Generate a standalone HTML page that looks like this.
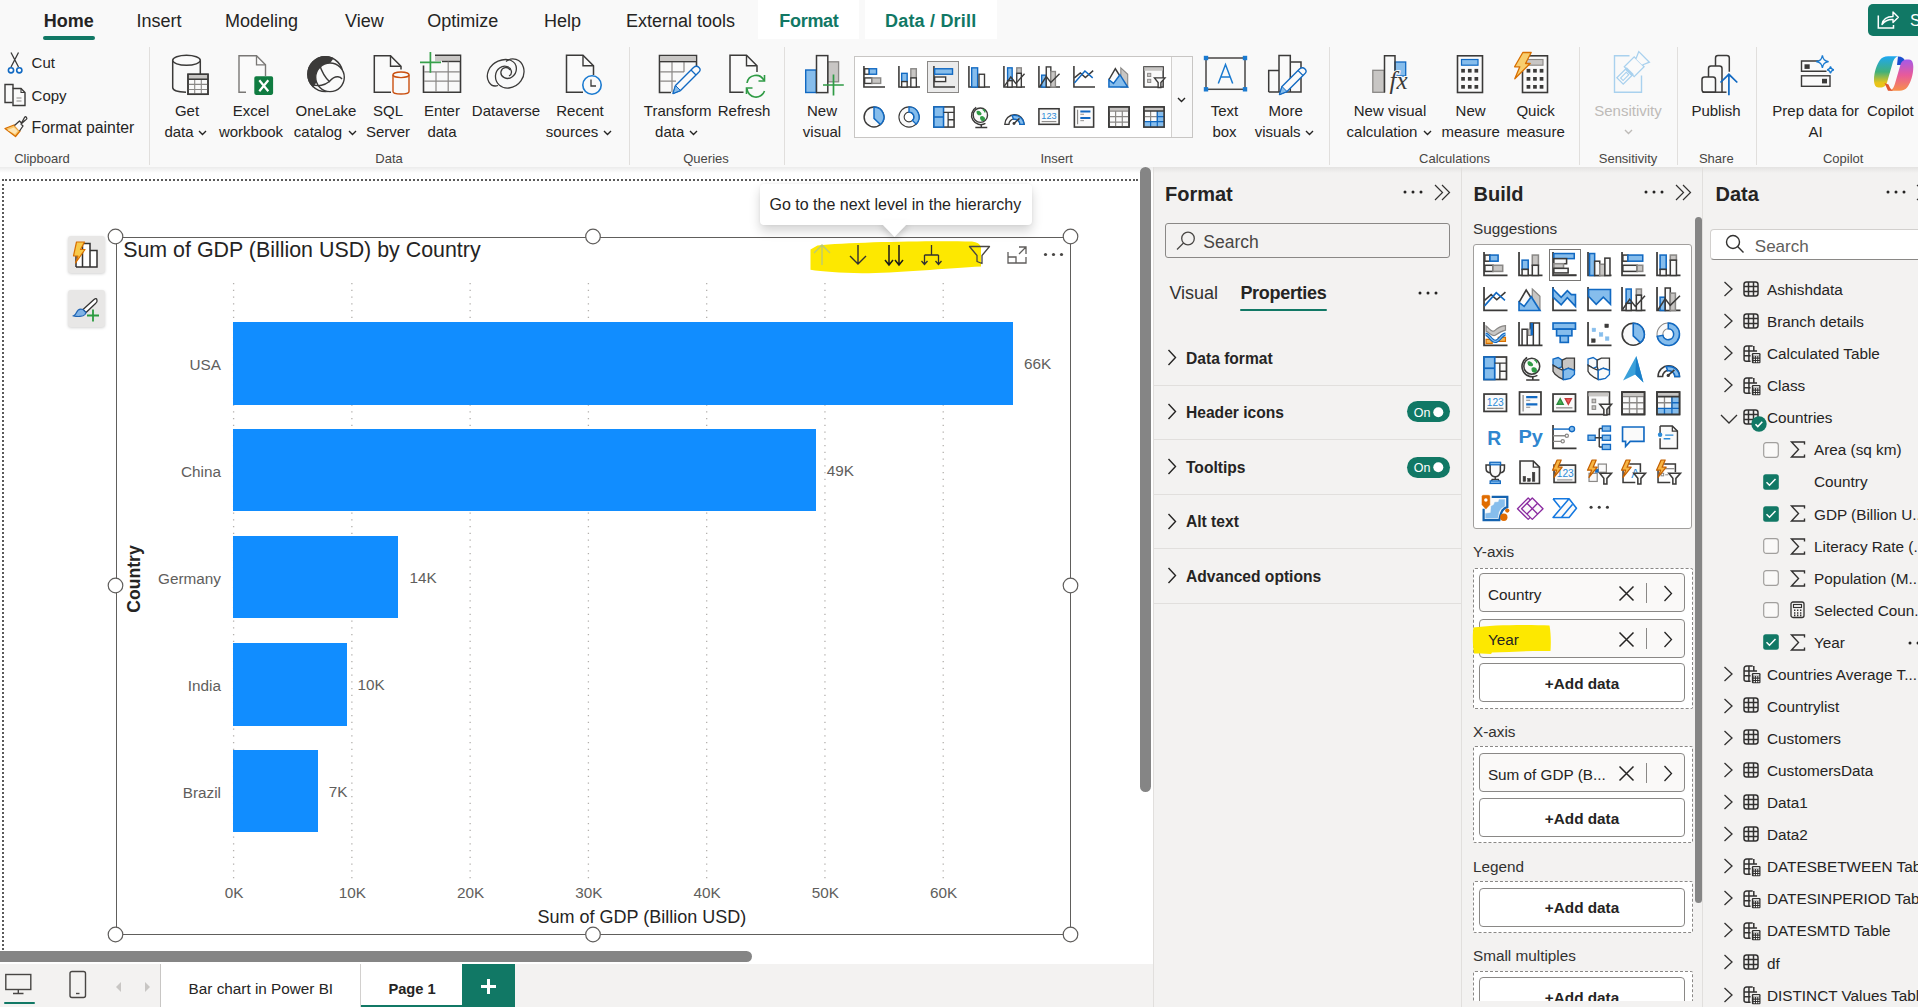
<!DOCTYPE html>
<html><head><meta charset="utf-8"><title>Power BI</title>
<style>
html,body{margin:0;padding:0}
body{width:1918px;height:1007px;overflow:hidden;position:relative;background:#f3f2f1;font-family:"Liberation Sans",sans-serif}
.t{position:absolute;line-height:1;white-space:nowrap}
svg{overflow:visible}
</style></head><body>
<div style="position:absolute;left:0px;top:0px;width:1918px;height:167px;background:#f9f9f9"></div>
<div style="position:absolute;left:0px;top:167px;width:1918px;height:6px;background:linear-gradient(#e6e6e6,rgba(243,242,241,0))"></div>
<div class="t" style="left:43.80px;top:11.66px;font-size:18px;font-weight:bold;color:#252423;">Home</div>
<div style="position:absolute;left:43px;top:36px;width:52px;height:3.5px;background:#117865;border-radius:2px"></div>
<div class="t" style="left:136.60px;top:11.66px;font-size:18px;color:#252423;">Insert</div>
<div class="t" style="left:225.00px;top:11.66px;font-size:18px;color:#252423;">Modeling</div>
<div class="t" style="left:345.00px;top:11.66px;font-size:18px;color:#252423;">View</div>
<div class="t" style="left:427.30px;top:11.66px;font-size:18px;color:#252423;">Optimize</div>
<div class="t" style="left:544.00px;top:11.66px;font-size:18px;color:#252423;">Help</div>
<div class="t" style="left:626.00px;top:11.66px;font-size:18px;color:#252423;">External tools</div>
<div style="position:absolute;left:758px;top:0px;width:101px;height:39px;background:#fff"></div>
<div style="position:absolute;left:865px;top:0px;width:132px;height:39px;background:#fff"></div>
<div class="t" style="left:779.30px;top:11.66px;font-size:18px;font-weight:bold;color:#117865;letter-spacing:-0.3px;">Format</div>
<div class="t" style="left:885.00px;top:11.66px;font-size:18px;font-weight:bold;color:#117865;letter-spacing:0.2px;">Data / Drill</div>
<div style="position:absolute;left:1868px;top:4px;width:60px;height:32.2px;background:#117865;border-radius:5px"></div>
<svg style="position:absolute;left:0px;top:0px;pointer-events:none" width="1918" height="40" viewBox="0 0 1918 40" fill="none"><path d="M1878.3 15.5V28H1893.5V25" stroke="#fff" stroke-width="1.5"/><path d="M1882 24.5C1883 19 1887 16.5 1893 16.5V12L1898.3 17.3L1893 22.5V19.5C1888 19.3 1884.5 21 1882 24.5Z" stroke="#fff" stroke-width="1.4" stroke-linejoin="round"/></svg>
<div class="t" style="left:1910.00px;top:12.66px;font-size:16px;color:#fff;">S</div>
<div style="position:absolute;left:149px;top:47px;width:1px;height:118px;background:#e1dfdd"></div>
<div style="position:absolute;left:629px;top:47px;width:1px;height:118px;background:#e1dfdd"></div>
<div style="position:absolute;left:784px;top:47px;width:1px;height:118px;background:#e1dfdd"></div>
<div style="position:absolute;left:1329px;top:47px;width:1px;height:118px;background:#e1dfdd"></div>
<div style="position:absolute;left:1578.5px;top:47px;width:1px;height:118px;background:#e1dfdd"></div>
<div style="position:absolute;left:1677px;top:47px;width:1px;height:118px;background:#e1dfdd"></div>
<div style="position:absolute;left:1756px;top:47px;width:1px;height:118px;background:#e1dfdd"></div>
<div class="t" style="left:42.00px;top:151.70px;font-size:13px;color:#484644;transform:translateX(-50%);">Clipboard</div>
<div class="t" style="left:389.00px;top:151.70px;font-size:13px;color:#484644;transform:translateX(-50%);">Data</div>
<div class="t" style="left:706.00px;top:151.70px;font-size:13px;color:#484644;transform:translateX(-50%);">Queries</div>
<div class="t" style="left:1056.70px;top:151.70px;font-size:13px;color:#484644;transform:translateX(-50%);">Insert</div>
<div class="t" style="left:1454.50px;top:151.70px;font-size:13px;color:#484644;transform:translateX(-50%);">Calculations</div>
<div class="t" style="left:1628.00px;top:151.70px;font-size:13px;color:#484644;transform:translateX(-50%);">Sensitivity</div>
<div class="t" style="left:1716.30px;top:151.70px;font-size:13px;color:#484644;transform:translateX(-50%);">Share</div>
<div class="t" style="left:1843.20px;top:151.70px;font-size:13px;color:#484644;transform:translateX(-50%);">Copilot</div>
<div class="t" style="left:31.60px;top:55.10px;font-size:15px;color:#252423;">Cut</div>
<div class="t" style="left:31.60px;top:88.10px;font-size:15px;color:#252423;">Copy</div>
<div class="t" style="left:31.60px;top:119.63px;font-size:15.8px;color:#252423;">Format painter</div>
<div class="t" style="left:187.00px;top:103.00px;font-size:15px;color:#252423;transform:translateX(-50%);">Get</div>
<div class="t" style="left:179.00px;top:123.80px;font-size:15px;color:#252423;transform:translateX(-50%);">data</div>
<svg style="position:absolute;left:197.5px;top:130px;" width="9" height="6" viewBox="0 0 9 6" fill="none"><path d="M1 1l3.5 3.5L8 1" stroke="#252423" stroke-width="1.4"/></svg>
<div class="t" style="left:251.00px;top:103.00px;font-size:15px;color:#252423;transform:translateX(-50%);">Excel</div>
<div class="t" style="left:251.00px;top:123.80px;font-size:15px;color:#252423;transform:translateX(-50%);">workbook</div>
<div class="t" style="left:326.00px;top:103.00px;font-size:15px;color:#252423;transform:translateX(-50%);">OneLake</div>
<div class="t" style="left:318.00px;top:123.80px;font-size:15px;color:#252423;transform:translateX(-50%);">catalog</div>
<svg style="position:absolute;left:347.5px;top:130px;" width="9" height="6" viewBox="0 0 9 6" fill="none"><path d="M1 1l3.5 3.5L8 1" stroke="#252423" stroke-width="1.4"/></svg>
<div class="t" style="left:388.00px;top:103.00px;font-size:15px;color:#252423;transform:translateX(-50%);">SQL</div>
<div class="t" style="left:388.00px;top:123.80px;font-size:15px;color:#252423;transform:translateX(-50%);">Server</div>
<div class="t" style="left:442.00px;top:103.00px;font-size:15px;color:#252423;transform:translateX(-50%);">Enter</div>
<div class="t" style="left:442.00px;top:123.80px;font-size:15px;color:#252423;transform:translateX(-50%);">data</div>
<div class="t" style="left:506.00px;top:103.00px;font-size:15px;color:#252423;transform:translateX(-50%);">Dataverse</div>
<div class="t" style="left:580.00px;top:103.00px;font-size:15px;color:#252423;transform:translateX(-50%);">Recent</div>
<div class="t" style="left:572.00px;top:123.80px;font-size:15px;color:#252423;transform:translateX(-50%);">sources</div>
<svg style="position:absolute;left:602.5px;top:130px;" width="9" height="6" viewBox="0 0 9 6" fill="none"><path d="M1 1l3.5 3.5L8 1" stroke="#252423" stroke-width="1.4"/></svg>
<div class="t" style="left:677.70px;top:103.00px;font-size:15px;color:#252423;transform:translateX(-50%);">Transform</div>
<div class="t" style="left:669.70px;top:123.80px;font-size:15px;color:#252423;transform:translateX(-50%);">data</div>
<svg style="position:absolute;left:689px;top:130px;" width="9" height="6" viewBox="0 0 9 6" fill="none"><path d="M1 1l3.5 3.5L8 1" stroke="#252423" stroke-width="1.4"/></svg>
<div class="t" style="left:744.00px;top:103.00px;font-size:15px;color:#252423;transform:translateX(-50%);">Refresh</div>
<div class="t" style="left:822.00px;top:103.00px;font-size:15px;color:#252423;transform:translateX(-50%);">New</div>
<div class="t" style="left:822.00px;top:123.80px;font-size:15px;color:#252423;transform:translateX(-50%);">visual</div>
<div class="t" style="left:1224.50px;top:103.00px;font-size:15px;color:#252423;transform:translateX(-50%);">Text</div>
<div class="t" style="left:1224.50px;top:123.80px;font-size:15px;color:#252423;transform:translateX(-50%);">box</div>
<div class="t" style="left:1285.70px;top:103.00px;font-size:15px;color:#252423;transform:translateX(-50%);">More</div>
<div class="t" style="left:1277.70px;top:123.80px;font-size:15px;color:#252423;transform:translateX(-50%);">visuals</div>
<svg style="position:absolute;left:1304.5px;top:130px;" width="9" height="6" viewBox="0 0 9 6" fill="none"><path d="M1 1l3.5 3.5L8 1" stroke="#252423" stroke-width="1.4"/></svg>
<div class="t" style="left:1390.00px;top:103.00px;font-size:15px;color:#252423;transform:translateX(-50%);">New visual</div>
<div class="t" style="left:1382.00px;top:123.80px;font-size:15px;color:#252423;transform:translateX(-50%);">calculation</div>
<svg style="position:absolute;left:1423px;top:130px;" width="9" height="6" viewBox="0 0 9 6" fill="none"><path d="M1 1l3.5 3.5L8 1" stroke="#252423" stroke-width="1.4"/></svg>
<div class="t" style="left:1470.60px;top:103.00px;font-size:15px;color:#252423;transform:translateX(-50%);">New</div>
<div class="t" style="left:1470.60px;top:123.80px;font-size:15px;color:#252423;transform:translateX(-50%);">measure</div>
<div class="t" style="left:1535.60px;top:103.00px;font-size:15px;color:#252423;transform:translateX(-50%);">Quick</div>
<div class="t" style="left:1535.60px;top:123.80px;font-size:15px;color:#252423;transform:translateX(-50%);">measure</div>
<div class="t" style="left:1628.00px;top:103.00px;font-size:15px;color:#bebbb8;transform:translateX(-50%);">Sensitivity</div>
<svg style="position:absolute;left:1624px;top:129px;" width="9" height="6" viewBox="0 0 9 6" fill="none"><path d="M1 1l3.5 3.5L8 1" stroke="#bebbb8" stroke-width="1.4"/></svg>
<div class="t" style="left:1716.00px;top:103.00px;font-size:15px;color:#252423;transform:translateX(-50%);">Publish</div>
<div class="t" style="left:1815.70px;top:103.00px;font-size:15px;color:#252423;transform:translateX(-50%);">Prep data for</div>
<div class="t" style="left:1815.70px;top:123.80px;font-size:15px;color:#252423;transform:translateX(-50%);">AI</div>
<div class="t" style="left:1867.00px;top:103.00px;font-size:15px;color:#252423;">Copilot</div>
<div style="position:absolute;left:854.3px;top:56px;width:338.5px;height:81.5px;background:#fff;border:1px solid #c8c6c4;box-sizing:border-box"></div>
<div style="position:absolute;left:1170.5px;top:57px;width:21.3px;height:79.5px;background:#f9f9f9;border-left:1px solid #d2d0ce;box-sizing:border-box"></div>
<svg style="position:absolute;left:1177px;top:97px;" width="9" height="6" viewBox="0 0 9 6" fill="none"><path d="M1 1l3.5 3.5L8 1" stroke="#252423" stroke-width="1.4"/></svg>
<div style="position:absolute;left:927px;top:61px;width:31.8px;height:31.6px;background:#ebebeb;border:1px solid #8a8886;box-sizing:border-box"></div>
<svg style="position:absolute;left:0;top:0" width="1918" height="167" viewBox="0 0 1918 167" fill="none"><path d="M11 52.5L18.5 67M18.5 52.5L11 67" fill="none" stroke="#3b3a39" stroke-width="1.3" /><circle cx="11" cy="70.3" r="2.6" fill="#fff" stroke="#1169c2" stroke-width="1.6"/><circle cx="19.3" cy="70.3" r="2.6" fill="#fff" stroke="#1169c2" stroke-width="1.6"/><path d="M13 88.5V84.5H5V102.5H12.5" fill="none" stroke="#3b3a39" stroke-width="1.4" /><path d="M13 88.5H21L25 92.5V105.5H13Z" fill="#fafafa" stroke="#3b3a39" stroke-width="1.4" /><path d="M21 88.5V92.5H25" fill="none" stroke="#3b3a39" stroke-width="1.1" /><path d="M16.5 98H21.5M16.5 101H21.5" fill="none" stroke="#8a8886" stroke-width="1.2" /><path d="M5 128.5L14 125L20 131L15.5 136.5Z" fill="#f8c76b" stroke="#d86f00" stroke-width="1.3" stroke-linejoin="round"/><path d="M7.5 130L14 127.5L17.5 131L15 134Z" fill="#fde6b8" stroke="#fde6b8" stroke-width="0.1" /><path d="M14.5 125.5L19.5 121L21.5 123L24.5 117.5Q25.5 116 26.5 117.5Q27.5 119 25.5 120L21 124L23 126L19.5 131" fill="#fafafa" stroke="#3b3a39" stroke-width="1.3" stroke-linejoin="round"/><path d="M172.7 60.3V87.5C172.7 90.5 178 92 186 92.2" fill="none" stroke="#3b3a39" stroke-width="1.5" /><path d="M200.3 60.3V74" fill="none" stroke="#3b3a39" stroke-width="1.5" /><ellipse cx="186.5" cy="60.3" rx="13.8" ry="5" fill="#fafafa" stroke="#3b3a39" stroke-width="1.5"/><rect x="188" y="74.3" width="20" height="20" fill="#fafafa" stroke="#3b3a39" stroke-width="1.5"/><rect x="188.8" y="75" width="18.4" height="3.8" fill="#c8c6c4"/><path d="M188 79.3H208M188 84.4H208M188 89.5H208M194.7 79.3V94.3M201.3 79.3V94.3" fill="none" stroke="#8a8886" stroke-width="1.1" /><path d="M188 74.3H208V94.3H188Z M188 79.3H208" fill="none" stroke="#3b3a39" stroke-width="1.5" /><path d="M246 92.3H239V55.8H256.5L265.5 64.8V76" fill="#fafafa" stroke="#797775" stroke-width="1.4" /><path d="M256.5 55.8V64.8H265.5" fill="none" stroke="#797775" stroke-width="1.3" /><rect x="254.3" y="76.3" width="18.8" height="18.6" rx="1.8" fill="#107c41"/><path d="M259.3 80.3L268.3 91.3M268.3 80.3L259.3 91.3" stroke="#fff" stroke-width="2.2"/><circle cx="325.3" cy="74.2" r="17.4" fill="#fafafa" stroke="#3b3a39" stroke-width="1.5"/><clipPath id="olc"><path d="M300 50H336L334.5 57L312.5 88H300Z"/></clipPath><circle cx="325.3" cy="74.2" r="18.1" fill="#3b3a39" clip-path="url(#olc)"/><circle cx="330" cy="77.3" r="14.3" fill="#fafafa" stroke="#3b3a39" stroke-width="1.4"/><path d="M319.3 64C321.5 71 325 77.5 329.4 81.5C332 78.5 335 76.5 338 76.8C340 77 341.3 78 342 79" fill="none" stroke="#3b3a39" stroke-width="1.4" /><path d="M311.3 84C315 85.8 318 86 321.5 85.3C325 84.6 327.5 83 329.4 81.5" fill="none" stroke="#3b3a39" stroke-width="1.4" /><path d="M391 92.3H374.3V55.8H390.5L401 66.3V69.5" fill="#fafafa" stroke="#3b3a39" stroke-width="1.5" /><path d="M390.5 55.8V66.3H401" fill="none" stroke="#3b3a39" stroke-width="1.4" /><path d="M393 74.8V91.5C393 94.8 409 94.8 409 91.5V74.8" fill="#fafafa" stroke="#ca5010" stroke-width="1.4"/><ellipse cx="401" cy="74.8" rx="8" ry="2.8" fill="#fafafa" stroke="#ca5010" stroke-width="1.4"/><path d="M423.5 65.5V92.3H460.5V55.3H435" fill="none" stroke="#3b3a39" stroke-width="1.6" /><rect x="435" y="56" width="24.8" height="5.2" fill="#c8c6c4"/><path d="M442 61.5H460.5" fill="none" stroke="#3b3a39" stroke-width="1.4" /><path d="M424 71.8H460M424 81.2H460M436 71.8V92M448.2 61.5V92" fill="none" stroke="#8a8886" stroke-width="1.2" /><path d="M430.4 52V72.8M420 62.4H441" fill="none" stroke="#36a04a" stroke-width="1.7" /><path d="M498 85.5C490 88 485 79 488.5 70.5C492 62 503 57.5 511 60.5C518 63.5 518 73 512 77C507 80.5 500 77 501 71.5C502 67 508 66 510 70" fill="none" stroke="#3b3a39" stroke-width="1.3" /><path d="M506 61.5C512 56.5 521 59 523.5 67.5C526 77 519 87 509 88C501 88.8 495 83 495.5 75.5C496 69 502 65 507 66.5C512 68 513 74 509 76" fill="none" stroke="#3b3a39" stroke-width="1.3" /><path d="M583 92.3H566.5V55.3H583L593.5 65.8V75" fill="#fafafa" stroke="#3b3a39" stroke-width="1.5" /><path d="M583 55.3V65.8H593.5" fill="none" stroke="#3b3a39" stroke-width="1.4" /><circle cx="592" cy="85" r="9.2" fill="#fafafa" stroke="#1a7ad0" stroke-width="1.6"/><path d="M591 79.5V86H596" fill="none" stroke="#3b3a39" stroke-width="1.3" /><path d="M671 92.5H659.5V55.5H696.5V74" fill="none" stroke="#3b3a39" stroke-width="1.6" /><rect x="660.3" y="56.3" width="35.4" height="5" fill="#c8c6c4"/><path d="M660 61.6H696M660 71.8H684M660 81.2H676M672 61.6V92M684 61.6V72" fill="none" stroke="#8a8886" stroke-width="1.2" /><path d="M660 61.6H696" fill="none" stroke="#3b3a39" stroke-width="1.4" /><path d="M673 93.5L675.5 85.5L693.5 67.5Q696.5 65 699 67.5Q701.5 70 698.5 72.5L680.5 90.5Z" fill="#fafafa" stroke="#1169c2" stroke-width="1.4" stroke-linejoin="round"/><path d="M673 93.5L675.5 85.5L680.5 90.5Z" fill="#86bdec" stroke="#1169c2" stroke-width="1.0" /><path d="M691 70L696 75" fill="none" stroke="#1169c2" stroke-width="1.2" /><path d="M743.5 92.3H730V55.3H746.5L757 65.8V72" fill="#fafafa" stroke="#3b3a39" stroke-width="1.5" /><path d="M746.5 55.3V65.8H757" fill="none" stroke="#3b3a39" stroke-width="1.4" /><path d="M747 83A9 9 0 0 1 764 80.5M764.5 91A9 9 0 0 1 747 88.5" fill="none" stroke="#2f9b45" stroke-width="1.6" /><path d="M764.5 75V81H758.5M746.5 94V88H752.5" fill="none" stroke="#2f9b45" stroke-width="1.6" /><rect x="805.7" y="70" width="10.6" height="22.5" fill="#86bdec" stroke="#1169c2" stroke-width="1.4"/><rect x="827.8" y="61.8" width="10.8" height="20" fill="#c8c6c4" stroke="#8a8886" stroke-width="1.3"/><rect x="816.5" y="55.6" width="11.3" height="37" fill="#fafafa" stroke="#3b3a39" stroke-width="1.5"/><path d="M833.5 74.5V95.6M823 85H843.8" fill="none" stroke="#2f9b45" stroke-width="1.7" /><rect x="1206" y="58" width="39" height="31.3" stroke="#484644" stroke-width="1.5"/><rect x="1203.8" y="55.8" width="4.4" height="4.4" fill="#1a7ad0"/><rect x="1242.8" y="55.8" width="4.4" height="4.4" fill="#1a7ad0"/><rect x="1203.8" y="87.1" width="4.4" height="4.4" fill="#1a7ad0"/><rect x="1242.8" y="87.1" width="4.4" height="4.4" fill="#1a7ad0"/><path d="M1218.3 83.5L1225.5 64.5L1232.7 83.5M1220.8 77H1230.2" stroke="#1a7ad0" stroke-width="1.5"/><path d="M1268.7 92V70.5H1279M1279 92V55.5H1290.3V92M1290.3 62H1301V92H1268.7" fill="#fafafa" stroke="#3b3a39" stroke-width="1.5" /><path d="M1279.5 94.5L1282 86.5L1299.5 69Q1302.5 66.5 1305 69Q1307.5 71.5 1304.5 74L1287 91.5Z" fill="#fafafa" stroke="#1169c2" stroke-width="1.4" stroke-linejoin="round"/><path d="M1279.5 94.5L1282 86.5L1287 91.5Z" fill="#86bdec" stroke="#1169c2" stroke-width="1.0" /><path d="M1298 70.5L1303 75.5" fill="none" stroke="#1169c2" stroke-width="1.1" /><rect x="1372.8" y="70.3" width="11.5" height="22" fill="#c8c6c4" stroke="#8a8886" stroke-width="1.3"/><rect x="1395" y="62" width="10.7" height="14" fill="#86bdec" stroke="#1169c2" stroke-width="1.3"/><path d="M1384.5 92.5V55.8H1395V74" stroke="#3b3a39" stroke-width="1.5"/><text x="1389.5" y="89" font-family="Liberation Serif" font-style="italic" font-size="25" fill="#3b3a39" stroke="#fafafa" stroke-width="2.2" paint-order="stroke">fx</text><rect x="1457.5" y="55.8" width="25" height="36.7" fill="#fafafa" stroke="#3b3a39" stroke-width="1.6"/><rect x="1461.5" y="59.5" width="16.5" height="5.7" fill="#86bdec" stroke="#1169c2" stroke-width="1.2"/><rect x="1461.2" y="68.9" width="3.7" height="3.7" fill="#3b3a39"/><rect x="1467.9" y="68.9" width="3.7" height="3.7" fill="#3b3a39"/><rect x="1474.5" y="68.9" width="3.7" height="3.7" fill="#3b3a39"/><rect x="1461.2" y="77" width="3.7" height="3.7" fill="#3b3a39"/><rect x="1467.9" y="77" width="3.7" height="3.7" fill="#3b3a39"/><rect x="1474.5" y="77" width="3.7" height="3.7" fill="#3b3a39"/><rect x="1461.2" y="85" width="3.7" height="3.7" fill="#3b3a39"/><rect x="1467.9" y="85" width="3.7" height="3.7" fill="#3b3a39"/><rect x="1474.5" y="85" width="3.7" height="3.7" fill="#3b3a39"/><rect x="1522.5" y="55.8" width="25" height="36.7" fill="#fafafa" stroke="#3b3a39" stroke-width="1.6"/><rect x="1526.5" y="59.5" width="16.5" height="5.7" fill="#c8c6c4" stroke="#8a8886" stroke-width="1.1"/><rect x="1526.6" y="68.9" width="3.7" height="3.7" fill="#3b3a39"/><rect x="1533.1" y="68.9" width="3.7" height="3.7" fill="#3b3a39"/><rect x="1539.7" y="68.9" width="3.7" height="3.7" fill="#3b3a39"/><rect x="1526.6" y="77" width="3.7" height="3.7" fill="#3b3a39"/><rect x="1533.1" y="77" width="3.7" height="3.7" fill="#3b3a39"/><rect x="1539.7" y="77" width="3.7" height="3.7" fill="#3b3a39"/><rect x="1526.6" y="85" width="3.7" height="3.7" fill="#3b3a39"/><rect x="1533.1" y="85" width="3.7" height="3.7" fill="#3b3a39"/><rect x="1539.7" y="85" width="3.7" height="3.7" fill="#3b3a39"/><path d="M1522.8 52.5H1531.2L1525.5 63.5H1530.2L1514.8 78.8L1519.8 66.8H1514.6Z" fill="#f8ce6e" stroke="#d86f00" stroke-width="1.3" stroke-linejoin="round"/><path d="M1629.5 55.8H1614.5V92.2H1641.5V75.5" fill="none" stroke="#a9d1ee" stroke-width="1.4" /><g transform="translate(0,4.5) rotate(-45 1631 69)"><rect x="1618" y="62" width="13" height="9" fill="#fafafa" stroke="#a9d1ee" stroke-width="1.3"/><rect x="1620.5" y="64.8" width="8" height="3.5" stroke="#a9d1ee" stroke-width="1.1"/><rect x="1631" y="59.5" width="14" height="14" fill="#fafafa" stroke="#a9d1ee" stroke-width="1.3"/><path d="M1631 61.5V71.5" stroke="#a9d1ee" stroke-width="3"/><path d="M1645 62L1652 59V74L1645 71" fill="#fafafa" stroke="#a9d1ee" stroke-width="1.3"/></g><path d="M1715.5 92.2H1704.3Q1702 92.2 1702 89.5V79.5Q1702 77 1704.5 77H1713Q1715.5 77 1715.5 79.5V92.2" fill="#fafafa" stroke="#3b3a39" stroke-width="1.5" /><path d="M1708.5 77V68.5Q1708.5 66 1711 66H1719.5Q1722 66 1722 68.5V92.2" fill="none" stroke="#3b3a39" stroke-width="1.5" /><path d="M1715.5 66V58Q1715.5 55.5 1718 55.5H1726.8Q1729.3 55.5 1729.3 58V71.8" fill="none" stroke="#3b3a39" stroke-width="1.5" /><path d="M1702.5 92.2H1726.5" fill="none" stroke="#3b3a39" stroke-width="1.5" /><path d="M1728.9 95.2V75M1720.5 82.5L1728.9 74.3L1737.3 82.5" fill="none" stroke="#1169c2" stroke-width="1.7" /><path d="M1826 61H1801.5V71.3H1826.5" fill="#fafafa" stroke="#3b3a39" stroke-width="1.4" /><rect x="1801.5" y="75.8" width="28.5" height="10.5" fill="#fafafa" stroke="#3b3a39" stroke-width="1.4"/><rect x="1804.5" y="64.3" width="5.2" height="4.6" fill="#3b3a39"/><rect x="1822" y="78.8" width="5" height="4.6" fill="#3b3a39"/><path d="M1822.4 55.3C1823.2 59.5 1824.4 60.8 1828.6 61.6C1824.4 62.4 1823.2 63.7 1822.4 67.9C1821.6 63.7 1820.4 62.4 1816.2 61.6C1820.4 60.8 1821.6 59.5 1822.4 55.3Z" fill="#fafafa" stroke="#1a7ad0" stroke-width="1.3" /><path d="M1830.5 66.3C1830.9 68.6 1831.5 69.3 1833.9 69.8C1831.5 70.3 1830.9 71 1830.5 73.3C1830.1 71 1829.5 70.3 1827.1 69.8C1829.5 69.3 1830.1 68.6 1830.5 66.3Z" fill="#fafafa" stroke="#1a7ad0" stroke-width="1.2" />
<defs>
<linearGradient id="cpA" x1="0" y1="0" x2="0" y2="1"><stop offset="0" stop-color="#1ea7f2"/><stop offset=".5" stop-color="#41b07a"/><stop offset=".85" stop-color="#e9c41a"/></linearGradient>
<linearGradient id="cpB" x1="0" y1="0" x2="0" y2="1"><stop offset="0" stop-color="#a55ae8"/><stop offset=".5" stop-color="#e85a9a"/><stop offset="1" stop-color="#f7904a"/></linearGradient>
</defs>
<path d="M1898 56.5C1902 56.5 1904 58 1905 61L1906.5 65H1897Z" fill="#1b4fd0"/>
<path d="M1874 80C1874 72 1877 64 1880 60C1882 57.5 1884.5 56.3 1888 56.3H1899C1895.5 56.5 1893.8 59 1892.5 63.5L1887 82.5C1886 85.5 1884 87.5 1880 87.5H1878.5C1875.5 87.5 1874 84.5 1874 80Z" fill="url(#cpA)"/>
<path d="M1913.3 67C1913.3 75 1910.5 83 1907.5 87C1905.5 89.5 1903 90.8 1899.5 90.8H1888.5C1892 90.5 1893.7 88 1895 83.5L1900.5 64.5C1901.5 61.5 1903.5 59.5 1907.5 59.5H1909C1912 59.5 1913.3 62.5 1913.3 67Z" fill="url(#cpB)"/>
<path d="M1884.5 83L1888 90.8H1893C1890.5 89.5 1889.5 87 1888.5 84.5Z" fill="#e0552f"/>
</svg>
<svg style="position:absolute;left:863.00px;top:65.80px;overflow:visible" width="22" height="22" viewBox="0 0 24 24" fill="none"><path d="M1 0V23H24" fill="none" stroke="#3b3a39" stroke-width="1.7" /><rect x="1.8" y="3" width="5" height="6" fill="#fafafa" stroke="#3b3a39" stroke-width="1.5"/><rect x="6.8" y="3" width="8" height="6" fill="#86bdec" stroke="#1169c2" stroke-width="1.5"/><rect x="1.8" y="13" width="8" height="6" fill="#fafafa" stroke="#3b3a39" stroke-width="1.5"/><rect x="9.8" y="13" width="9.5" height="6" fill="#c8c6c4" stroke="#8a8886" stroke-width="1.5"/></svg>
<svg style="position:absolute;left:897.95px;top:65.80px;overflow:visible" width="22" height="22" viewBox="0 0 24 24" fill="none"><path d="M1 0V23H24" fill="none" stroke="#3b3a39" stroke-width="1.7" /><rect x="4" y="8" width="6" height="9" fill="#86bdec" stroke="#1169c2" stroke-width="1.5"/><rect x="4" y="17" width="6" height="6" fill="#fafafa" stroke="#3b3a39" stroke-width="1.5"/><rect x="14" y="3" width="6" height="10" fill="#c8c6c4" stroke="#8a8886" stroke-width="1.5"/><rect x="14" y="13" width="6" height="10" fill="#fafafa" stroke="#3b3a39" stroke-width="1.5"/></svg>
<svg style="position:absolute;left:932.90px;top:65.80px;overflow:visible" width="22" height="22" viewBox="0 0 24 24" fill="none"><path d="M1 0V23H24" fill="none" stroke="#3b3a39" stroke-width="1.7" /><rect x="1.8" y="3" width="19.5" height="6" fill="#86bdec" stroke="#1169c2" stroke-width="1.5"/><rect x="1.8" y="12" width="12" height="5" fill="#fafafa" stroke="#3b3a39" stroke-width="1.5"/></svg>
<svg style="position:absolute;left:967.85px;top:65.80px;overflow:visible" width="22" height="22" viewBox="0 0 24 24" fill="none"><path d="M1 0V23H24" fill="none" stroke="#3b3a39" stroke-width="1.7" /><rect x="4" y="2" width="6.5" height="21" fill="#86bdec" stroke="#1169c2" stroke-width="1.5"/><rect x="12" y="9" width="6" height="14" fill="#fafafa" stroke="#3b3a39" stroke-width="1.5"/></svg>
<svg style="position:absolute;left:1002.80px;top:65.80px;overflow:visible" width="22" height="22" viewBox="0 0 24 24" fill="none"><path d="M1 0V23H24" fill="none" stroke="#3b3a39" stroke-width="1.7" /><rect x="5" y="2" width="5" height="14" fill="#86bdec" stroke="#1169c2" stroke-width="1.5"/><rect x="5" y="16" width="5" height="7" fill="#fafafa" stroke="#3b3a39" stroke-width="1.5"/><rect x="15" y="2" width="5" height="6" fill="#c8c6c4" stroke="#8a8886" stroke-width="1.5"/><rect x="15" y="8" width="5" height="15" fill="#fafafa" stroke="#3b3a39" stroke-width="1.5"/><path d="M1.5 22L8.5 12L14 19L23.5 8.5" fill="none" stroke="#3b3a39" stroke-width="1.5" /></svg>
<svg style="position:absolute;left:1037.75px;top:65.80px;overflow:visible" width="22" height="22" viewBox="0 0 24 24" fill="none"><path d="M1 0V23H24" fill="none" stroke="#3b3a39" stroke-width="1.7" /><rect x="4" y="10" width="5" height="13" fill="#86bdec" stroke="#1169c2" stroke-width="1.5"/><rect x="9" y="1" width="5" height="22" fill="#fafafa" stroke="#3b3a39" stroke-width="1.5"/><rect x="14" y="6" width="5" height="17" fill="#c8c6c4" stroke="#8a8886" stroke-width="1.5"/><path d="M1.5 23L9 11.5L14 18L23.5 8.5" fill="none" stroke="#3b3a39" stroke-width="1.5" /></svg>
<svg style="position:absolute;left:1072.70px;top:65.80px;overflow:visible" width="22" height="22" viewBox="0 0 24 24" fill="none"><path d="M1 0V23H24" fill="none" stroke="#3b3a39" stroke-width="1.7" /><path d="M1.5 13L8 7.5L13.5 12.5L22 5" fill="none" stroke="#3b3a39" stroke-width="1.6" /><path d="M1.5 18.5L13 5.5L21.5 13" fill="none" stroke="#1169c2" stroke-width="1.6" /></svg>
<svg style="position:absolute;left:1107.65px;top:65.80px;overflow:visible" width="22" height="22" viewBox="0 0 24 24" fill="none"><path d="M14 2L21.5 9V23H14Z" fill="#c8c6c4" stroke="#8a8886" stroke-width="1.2" /><path d="M1 15L8 3L15 14" fill="#fafafa" stroke="#3b3a39" stroke-width="1.6" /><path d="M1 15L6 19L13 9.5L21.5 23H1Z" fill="#86bdec" stroke="#1169c2" stroke-width="1.6" /></svg>
<svg style="position:absolute;left:1142.60px;top:65.80px;overflow:visible" width="22" height="22" viewBox="0 0 24 24" fill="none"><rect x="1" y="1" width="21" height="22" fill="#fafafa" stroke="#3b3a39" stroke-width="1.6"/><rect x="1.8" y="1.8" width="19.4" height="3.2" fill="#c8c6c4" stroke="#c8c6c4" stroke-width="0.5"/><rect x="5" y="8" width="3.5" height="3.5" fill="#c8c6c4" stroke="#8a8886" stroke-width="1.0"/><rect x="5" y="14.5" width="3.5" height="3.5" fill="#c8c6c4" stroke="#8a8886" stroke-width="1.0"/><path d="M12.5 13H24L19.5 18V23.5H16.5V18Z" fill="#fafafa" stroke="#3b3a39" stroke-width="1.5" /></svg>
<svg style="position:absolute;left:863.00px;top:106.00px;overflow:visible" width="22" height="22" viewBox="0 0 24 24" fill="none"><circle cx="12" cy="12" r="10.8" fill="#fafafa" stroke="#3b3a39" stroke-width="1.6"/><path d="M12 1.2A10.8 10.8 0 0 1 19 20.2L12 13.5Z" fill="#86bdec" stroke="#1169c2" stroke-width="1.6" /></svg>
<svg style="position:absolute;left:897.95px;top:106.00px;overflow:visible" width="22" height="22" viewBox="0 0 24 24" fill="none"><circle cx="12" cy="12" r="8.2" fill="none" stroke="#fafafa" stroke-width="5.5"/><circle cx="12" cy="12" r="11" stroke="#3b3a39" stroke-width="1.2"/><circle cx="12" cy="12" r="5.3" stroke="#3b3a39" stroke-width="1.2"/><path d="M12 1A11 11 0 0 1 19.8 19.8L15.8 15.8A5.3 5.3 0 0 0 12 6.7Z" fill="#86bdec" stroke="#1169c2" stroke-width="1.5" /></svg>
<svg style="position:absolute;left:932.90px;top:106.00px;overflow:visible" width="22" height="22" viewBox="0 0 24 24" fill="none"><rect x="1" y="1" width="22" height="22" fill="#fafafa" stroke="#3b3a39" stroke-width="1.7"/><rect x="1" y="1" width="10.5" height="22" fill="#86bdec" stroke="#1169c2" stroke-width="1.7"/><path d="M1 12H11.5" fill="none" stroke="#1169c2" stroke-width="1.7" /><path d="M11.5 7H23M16.5 7V23M16.5 15H23" fill="none" stroke="#3b3a39" stroke-width="1.4" /></svg>
<svg style="position:absolute;left:967.85px;top:106.00px;overflow:visible" width="22" height="22" viewBox="0 0 24 24" fill="none"><circle cx="13.5" cy="10" r="7.8" fill="#fafafa" stroke="#3b3a39" stroke-width="1.5"/><path d="M9 1.5A10 10 0 0 0 19 19" fill="none" stroke="#3b3a39" stroke-width="1.6" /><path d="M14.5 20V23.5M8 23.5H21" fill="none" stroke="#3b3a39" stroke-width="1.6" /><path d="M10 6c2-1 3 .5 4 2s-2 2-3 1-1.5-1-1-3zM14 12c1.5-1 4 0 4 2s-2 2-3 1.5-1.5-2.5-1-3.5zM16 4c1 0 2.5 1 2.5 3" fill="#2f9b45" stroke="#2f9b45" stroke-width="1.2" /></svg>
<svg style="position:absolute;left:1002.80px;top:106.00px;overflow:visible" width="22" height="22" viewBox="0 0 24 24" fill="none"><path d="M2 20A10.5 10.5 0 0 1 23 20H18.5A6 6 0 0 0 6.5 20Z" fill="#fafafa" stroke="#3b3a39" stroke-width="1.5" /><path d="M10 10.5A10.5 10.5 0 0 1 23 20H18.5A6 6 0 0 0 11.5 14.5Z" fill="#86bdec" stroke="#1169c2" stroke-width="1.5" /><path d="M12 19L18 13.5" fill="none" stroke="#3b3a39" stroke-width="1.6" /><circle cx="12" cy="19" r="1.6" fill="#3b3a39"/></svg>
<svg style="position:absolute;left:1037.75px;top:106.00px;overflow:visible" width="22" height="22" viewBox="0 0 24 24" fill="none"><rect x="1" y="3" width="22" height="17" fill="#fafafa" stroke="#3b3a39" stroke-width="1.7"/><text x="12" y="14.5" text-anchor="middle" font-family="Liberation Sans" font-size="10" fill="#2a8ad8">123</text><path d="M4 17H20" fill="none" stroke="#8a8886" stroke-width="1.2" /></svg>
<svg style="position:absolute;left:1072.70px;top:106.00px;overflow:visible" width="22" height="22" viewBox="0 0 24 24" fill="none"><rect x="1.5" y="1" width="21" height="22" fill="#fafafa" stroke="#3b3a39" stroke-width="1.7"/><path d="M5 4V20" fill="none" stroke="#8a8886" stroke-width="1.2" /><path d="M8 6H19M8 13H19" fill="none" stroke="#1169c2" stroke-width="2.2" /><path d="M8 9H12M8 16H12" fill="none" stroke="#8a8886" stroke-width="1.0" /></svg>
<svg style="position:absolute;left:1107.65px;top:106.00px;overflow:visible" width="22" height="22" viewBox="0 0 24 24" fill="none"><rect x="1" y="1" width="22" height="22" fill="#fafafa" stroke="#3b3a39" stroke-width="1.7"/><rect x="1.8" y="1.8" width="20.4" height="3.4" fill="#c8c6c4" stroke="#c8c6c4" stroke-width="0.5"/><path d="M1 5.5H23M1 11.5H23M1 17.5H23M8.3 5.5V23M15.6 5.5V23" fill="none" stroke="#8a8886" stroke-width="1.3" /><path d="M1 1H23V23H1Z" fill="none" stroke="#3b3a39" stroke-width="1.7" /></svg>
<svg style="position:absolute;left:1142.60px;top:106.00px;overflow:visible" width="22" height="22" viewBox="0 0 24 24" fill="none"><rect x="1" y="1" width="22" height="22" fill="#fafafa" stroke="#3b3a39" stroke-width="1.7"/><rect x="1.8" y="1.8" width="20.4" height="3.4" fill="#c8c6c4" stroke="#c8c6c4" stroke-width="0.5"/><rect x="15.6" y="5.5" width="7.4" height="17.5" fill="#86bdec" stroke="#86bdec" stroke-width="0.1"/><rect x="1" y="17" width="22" height="6" fill="#86bdec" stroke="#86bdec" stroke-width="0.1"/><path d="M1 11.5H15.6M8.3 5.5V17M15.6 5.5V17" fill="none" stroke="#8a8886" stroke-width="1.3" /><path d="M15.6 5.5V23M1 17H23M15.6 11.5H23M8.3 17V23" fill="none" stroke="#1169c2" stroke-width="1.3" /><path d="M1 5.5H23M1 1H23V23H1Z" fill="none" stroke="#3b3a39" stroke-width="1.7" /></svg>
<div style="position:absolute;left:0px;top:173px;width:1153px;height:791px;background:#fff"></div>
<div style="position:absolute;left:0px;top:167px;width:1153px;height:6px;background:linear-gradient(#ebebeb,#fff)"></div>
<div style="position:absolute;left:1.5px;top:178.5px;width:1136px;height:783px;border-top:2px dotted #5a5a5a;border-left:2px dotted #5a5a5a;box-sizing:border-box"></div>
<div style="position:absolute;left:68px;top:236px;width:37px;height:37px;background:#e8e7e6;border-radius:3px;box-shadow:0 1px 3px rgba(0,0,0,.18)"></div>
<div style="position:absolute;left:68px;top:290px;width:37px;height:37px;background:#e8e7e6;border-radius:3px;box-shadow:0 1px 3px rgba(0,0,0,.18)"></div>
<svg style="position:absolute;left:0px;top:0px;pointer-events:none" width="120" height="340" viewBox="0 0 120 340" fill="none"><path d="M76 267V250.5H82.5V267M82.5 267V243.5H90V267M90 267V250.5H97V267H76" stroke="#323130" stroke-width="1.5" fill="#fff"/><path d="M84.5 242L76.5 242 73.5 256H78L75.5 263 85 249.5H80.5z" fill="#f8c94a" stroke="#d86f00" stroke-width="1.2" stroke-linejoin="round"/></svg>
<svg style="position:absolute;left:0px;top:0px;pointer-events:none" width="120" height="340" viewBox="0 0 120 340" fill="none"><path d="M94 299.5Q96.5 297.5 97 300Q97.5 302 95.5 303.5L86 312.5L83 309.5z" stroke="#323130" stroke-width="1.3" fill="#fff"/><path d="M83 309.5C80 308.5 77.5 310 76.5 312.5C75.5 315 74 315.5 73.5 315.8C77 316.8 83 317 85 314.5L86 312.5z" fill="#7fb2e6" stroke="#1f64b4" stroke-width="1.2"/><path d="M93 309.5v12M87 315.5h12" stroke="#2b9b3f" stroke-width="1.8"/></svg>
<div style="position:absolute;left:116px;top:237px;width:955px;height:698px;border:1px solid #605e5c;box-sizing:border-box"></div>
<div class="t" style="left:123.20px;top:239.78px;font-size:21.4px;color:#252423;">Sum of GDP (Billion USD) by Country</div>
<svg style="position:absolute;left:226px;top:283px;" width="720" height="600" viewBox="0 0 720 600" fill="none"><line x1="7.60" y1="0" x2="7.60" y2="596" stroke="#b3b0ad" stroke-width="1.3" stroke-dasharray="1.3 5.45"/><line x1="125.87" y1="0" x2="125.87" y2="596" stroke="#b3b0ad" stroke-width="1.3" stroke-dasharray="1.3 5.45"/><line x1="244.14" y1="0" x2="244.14" y2="596" stroke="#b3b0ad" stroke-width="1.3" stroke-dasharray="1.3 5.45"/><line x1="362.41" y1="0" x2="362.41" y2="596" stroke="#b3b0ad" stroke-width="1.3" stroke-dasharray="1.3 5.45"/><line x1="480.68" y1="0" x2="480.68" y2="596" stroke="#b3b0ad" stroke-width="1.3" stroke-dasharray="1.3 5.45"/><line x1="598.95" y1="0" x2="598.95" y2="596" stroke="#b3b0ad" stroke-width="1.3" stroke-dasharray="1.3 5.45"/><line x1="717.22" y1="0" x2="717.22" y2="596" stroke="#b3b0ad" stroke-width="1.3" stroke-dasharray="1.3 5.45"/></svg>
<div style="position:absolute;left:233px;top:322.3px;width:780.0px;height:82.3px;background:#118dff"></div>
<div class="t" style="left:221.00px;top:356.95px;font-size:15.3px;color:#605e5c;transform:translateX(-100%);">USA</div>
<div class="t" style="left:1024.00px;top:355.75px;font-size:15.3px;color:#605e5c;">66K</div>
<div style="position:absolute;left:233px;top:429.1px;width:582.8px;height:82.3px;background:#118dff"></div>
<div class="t" style="left:221.00px;top:463.75px;font-size:15.3px;color:#605e5c;transform:translateX(-100%);">China</div>
<div class="t" style="left:826.80px;top:462.55px;font-size:15.3px;color:#605e5c;">49K</div>
<div style="position:absolute;left:233px;top:536.2px;width:165.4px;height:82.3px;background:#118dff"></div>
<div class="t" style="left:221.00px;top:570.85px;font-size:15.3px;color:#605e5c;transform:translateX(-100%);">Germany</div>
<div class="t" style="left:409.40px;top:569.65px;font-size:15.3px;color:#605e5c;">14K</div>
<div style="position:absolute;left:233px;top:643.3px;width:113.6px;height:82.3px;background:#118dff"></div>
<div class="t" style="left:221.00px;top:677.95px;font-size:15.3px;color:#605e5c;transform:translateX(-100%);">India</div>
<div class="t" style="left:357.60px;top:676.75px;font-size:15.3px;color:#605e5c;">10K</div>
<div style="position:absolute;left:233px;top:750.2px;width:84.8px;height:82.3px;background:#118dff"></div>
<div class="t" style="left:221.00px;top:784.85px;font-size:15.3px;color:#605e5c;transform:translateX(-100%);">Brazil</div>
<div class="t" style="left:328.80px;top:783.65px;font-size:15.3px;color:#605e5c;">7K</div>
<div class="t" style="left:234.00px;top:885.05px;font-size:15.3px;color:#605e5c;transform:translateX(-50%);">0K</div>
<div class="t" style="left:352.27px;top:885.05px;font-size:15.3px;color:#605e5c;transform:translateX(-50%);">10K</div>
<div class="t" style="left:470.54px;top:885.05px;font-size:15.3px;color:#605e5c;transform:translateX(-50%);">20K</div>
<div class="t" style="left:588.81px;top:885.05px;font-size:15.3px;color:#605e5c;transform:translateX(-50%);">30K</div>
<div class="t" style="left:707.08px;top:885.05px;font-size:15.3px;color:#605e5c;transform:translateX(-50%);">40K</div>
<div class="t" style="left:825.35px;top:885.05px;font-size:15.3px;color:#605e5c;transform:translateX(-50%);">50K</div>
<div class="t" style="left:943.62px;top:885.05px;font-size:15.3px;color:#605e5c;transform:translateX(-50%);">60K</div>
<div class="t" style="left:537.60px;top:908.46px;font-size:18px;color:#252423;">Sum of GDP (Billion USD)</div>
<div class="t" style="left:134.6px;top:579px;font-size:17.6px;font-weight:bold;color:#252423;transform:translate(-50%,-50%) rotate(-90deg);">Country</div>
<svg style="position:absolute;left:0px;top:0px;pointer-events:none" width="1100" height="300" viewBox="0 0 1100 300" fill="none"><path d="M810.5 249.5L817.5 245.5C850 242 930 240.5 972 241.5C977 242 980 244 981 247L981 266.5C950 268 890 273.5 862 273.3C840 273 822 271.5 810.5 269.8Z" fill="#fde800"/></svg>
<svg style="position:absolute;left:812px;top:244px;" width="20" height="22" viewBox="0 0 20 22" fill="none"><path d="M10 21V2M2 9l8-8 8 8" stroke="#b9c87a" stroke-width="1.3"/></svg>
<svg style="position:absolute;left:848px;top:244px;" width="20" height="22" viewBox="0 0 20 22" fill="none"><path d="M10 1v19M2 12l8 8 8-8" stroke="#323130" stroke-width="1.4"/></svg>
<svg style="position:absolute;left:884px;top:244px;" width="21" height="22" viewBox="0 0 21 22" fill="none"><path d="M5 1v20M15 1v20M1 16l4 5 4-5M11 16l4 5 4-5" stroke="#1b1a19" stroke-width="1.5"/></svg>
<svg style="position:absolute;left:921px;top:244px;" width="21" height="22" viewBox="0 0 21 22" fill="none"><path d="M10.5 1v10M3.5 11h14M3.5 11v9M17.5 11v9M0.5 17l3 3.5 3-3.5M14.5 17l3 3.5 3-3.5" stroke="#323130" stroke-width="1.3"/></svg>
<svg style="position:absolute;left:968px;top:245px;" width="24" height="20" viewBox="0 0 24 20" fill="none"><path d="M1.5 1.5h20l-7.5 9v8l-5-2v-6z" stroke="#484644" stroke-width="1.3" stroke-linejoin="round"/></svg>
<svg style="position:absolute;left:1007px;top:246px;" width="21" height="18" viewBox="0 0 21 18" fill="none"><path d="M1 6v11h18V11M1 11h8v6M12 1h7v7M19 1l-7 7" stroke="#605e5c" stroke-width="1.3"/></svg>
<svg style="position:absolute;left:1043px;top:252px;" width="22" height="5" viewBox="0 0 22 5" fill="none"><circle cx="2.5" cy="2.5" r="1.6" fill="#484644"/><circle cx="10.5" cy="2.5" r="1.6" fill="#484644"/><circle cx="18.5" cy="2.5" r="1.6" fill="#484644"/></svg>
<svg style="position:absolute;left:0px;top:0px;pointer-events:none" width="1152" height="1007" viewBox="0 0 1152 1007" fill="none"><circle cx="115.5" cy="236.5" r="7.3" fill="#fff" stroke="#605e5c" stroke-width="1.2"/><circle cx="593" cy="236.5" r="7.3" fill="#fff" stroke="#605e5c" stroke-width="1.2"/><circle cx="1070.5" cy="236.5" r="7.3" fill="#fff" stroke="#605e5c" stroke-width="1.2"/><circle cx="115.5" cy="585.5" r="7.3" fill="#fff" stroke="#605e5c" stroke-width="1.2"/><circle cx="1070.5" cy="585.5" r="7.3" fill="#fff" stroke="#605e5c" stroke-width="1.2"/><circle cx="115.5" cy="934.5" r="7.3" fill="#fff" stroke="#605e5c" stroke-width="1.2"/><circle cx="593" cy="934.5" r="7.3" fill="#fff" stroke="#605e5c" stroke-width="1.2"/><circle cx="1070.5" cy="934.5" r="7.3" fill="#fff" stroke="#605e5c" stroke-width="1.2"/></svg>
<div style="position:absolute;left:759.7px;top:183.5px;width:272px;height:41px;background:#fff;border-radius:4px;box-shadow:0 6px 11px rgba(0,0,0,.17),0 0 3px rgba(0,0,0,.06)"></div>
<svg style="position:absolute;left:878px;top:222px;filter:drop-shadow(0 3px 3px rgba(0,0,0,.18))" width="34" height="18" viewBox="0 0 34 18" fill="none"><path d="M2 0 L16.5 15 L31 0z" fill="#fff"/></svg>
<div style="position:absolute;left:765px;top:220px;width:262px;height:5px;background:#fff"></div>
<div class="t" style="left:769.50px;top:196.56px;font-size:16px;color:#252423;">Go to the next level in the hierarchy</div>
<div style="position:absolute;left:1139.7px;top:167px;width:11px;height:625px;background:#858585;border-radius:5.5px"></div>
<div style="position:absolute;left:-6px;top:950.6px;width:758px;height:11.4px;background:#858585;border-radius:6px"></div>
<div style="position:absolute;left:0px;top:964px;width:1153px;height:43px;background:#f3f2f1"></div>
<div style="position:absolute;left:160px;top:964px;width:1px;height:43px;background:#c8c6c4"></div>
<div style="position:absolute;left:161px;top:964px;width:199px;height:43px;background:#fff"></div>
<div style="position:absolute;left:360px;top:964px;width:1px;height:43px;background:#d2d0ce"></div>
<div style="position:absolute;left:361px;top:964px;width:101px;height:43px;background:#fff"></div>
<div style="position:absolute;left:361px;top:1004.5px;width:101px;height:2.5px;background:#117865"></div>
<div class="t" style="left:188.60px;top:981.05px;font-size:15.3px;color:#252423;">Bar chart in Power BI</div>
<div class="t" style="left:388.40px;top:981.56px;font-size:14.7px;font-weight:bold;color:#252423;">Page 1</div>
<div style="position:absolute;left:462px;top:964px;width:52.6px;height:43px;background:#117865"></div>
<svg style="position:absolute;left:479px;top:977px;" width="19" height="19" viewBox="0 0 19 19" fill="none"><path d="M9.5 2v15M2 9.5h15" stroke="#fff" stroke-width="3"/></svg>
<svg style="position:absolute;left:4px;top:972px;" width="30" height="24" viewBox="0 0 30 24" fill="none"><rect x="1.8" y="2.5" width="25" height="15" stroke="#484644" stroke-width="1.4"/><path d="M14.3 17.5v4M9 21.5h10.5" stroke="#484644" stroke-width="1.4"/></svg>
<div style="position:absolute;left:4px;top:1001.8px;width:31px;height:2px;background:#117865;border-radius:1px"></div>
<svg style="position:absolute;left:68px;top:970px;" width="20" height="30" viewBox="0 0 20 30" fill="none"><rect x="2" y="1.5" width="15.5" height="26" rx="2" stroke="#484644" stroke-width="1.4"/><path d="M8 23.5h3.5" stroke="#484644" stroke-width="1.4"/></svg>
<svg style="position:absolute;left:113px;top:980px;" width="40" height="14" viewBox="0 0 40 14" fill="none"><path d="M8 2 L3 7 L8 12z" fill="#c8c6c4"/><path d="M32 2 L37 7 L32 12z" fill="#c8c6c4"/></svg>
<div style="position:absolute;left:1153px;top:167px;width:1px;height:840px;background:#e1dfdd"></div>
<div style="position:absolute;left:1154px;top:173px;width:764px;height:834px;background:#f3f2f1"></div>
<div style="position:absolute;left:1154px;top:167px;width:764px;height:6px;background:linear-gradient(#e4e3e2,#f3f2f1)"></div>
<div style="position:absolute;left:1461px;top:167px;width:1px;height:840px;background:#e1dfdd"></div>
<div style="position:absolute;left:1702px;top:167px;width:1px;height:840px;background:#e1dfdd"></div>
<div class="t" style="left:1165.00px;top:184.07px;font-size:20px;font-weight:bold;color:#252423;">Format</div>
<svg style="position:absolute;left:1402.5px;top:190.3px;" width="20" height="4" viewBox="0 0 20 4" fill="none"><circle cx="2" cy="2" r="1.5" fill="#252423"/><circle cx="10" cy="2" r="1.5" fill="#252423"/><circle cx="18" cy="2" r="1.5" fill="#252423"/></svg>
<svg style="position:absolute;left:1433.5px;top:183.5px;" width="17" height="17" viewBox="0 0 17 17" fill="none"><path d="M1 1l7.5 7.5L1 16M8 1l7.5 7.5L8 16" stroke="#323130" stroke-width="1.2"/></svg>
<div style="position:absolute;left:1165px;top:223px;width:285px;height:35px;border:1px solid #8a8886;border-radius:3px;box-sizing:border-box"></div>
<svg style="position:absolute;left:1175px;top:230px;" width="22" height="22" viewBox="0 0 22 22" fill="none"><circle cx="13" cy="8.5" r="6.3" stroke="#484644" stroke-width="1.3"/><path d="M8.5 13L2 19.5" stroke="#484644" stroke-width="1.3"/></svg>
<div class="t" style="left:1203.30px;top:233.79px;font-size:17.5px;color:#484644;">Search</div>
<div class="t" style="left:1169.40px;top:284.46px;font-size:18px;color:#323130;">Visual</div>
<div class="t" style="left:1240.40px;top:284.46px;font-size:18px;font-weight:bold;color:#252423;letter-spacing:-0.3px;">Properties</div>
<div style="position:absolute;left:1240px;top:308.5px;width:87px;height:2.5px;background:#117865;border-radius:1px"></div>
<svg style="position:absolute;left:1418px;top:291px;" width="20" height="4" viewBox="0 0 20 4" fill="none"><circle cx="2" cy="2" r="1.5" fill="#252423"/><circle cx="10" cy="2" r="1.5" fill="#252423"/><circle cx="18" cy="2" r="1.5" fill="#252423"/></svg>
<svg style="position:absolute;left:1167px;top:349.2px;" width="10" height="16" viewBox="0 0 10 16" fill="none"><path d="M1.5 1l7 7.5-7 7.5" stroke="#252423" stroke-width="1.4"/></svg>
<div class="t" style="left:1186.00px;top:350.99px;font-size:15.6px;font-weight:bold;color:#252423;">Data format</div>
<svg style="position:absolute;left:1167px;top:403px;" width="10" height="16" viewBox="0 0 10 16" fill="none"><path d="M1.5 1l7 7.5-7 7.5" stroke="#252423" stroke-width="1.4"/></svg>
<div class="t" style="left:1186.00px;top:404.79px;font-size:15.6px;font-weight:bold;color:#252423;">Header icons</div>
<div style="position:absolute;left:1407px;top:401.2px;width:43.3px;height:21.3px;background:#117865;border-radius:11px"></div>
<div class="t" style="left:1413.80px;top:406.92px;font-size:12.5px;color:#fff;">On</div>
<svg style="position:absolute;left:1433px;top:406.5px;" width="11" height="11" viewBox="0 0 11 11" fill="none"><circle cx="5.3" cy="5.3" r="5" fill="#fff"/></svg>
<svg style="position:absolute;left:1167px;top:458.3px;" width="10" height="16" viewBox="0 0 10 16" fill="none"><path d="M1.5 1l7 7.5-7 7.5" stroke="#252423" stroke-width="1.4"/></svg>
<div class="t" style="left:1186.00px;top:460.09px;font-size:15.6px;font-weight:bold;color:#252423;">Tooltips</div>
<div style="position:absolute;left:1407px;top:456.5px;width:43.3px;height:21.3px;background:#117865;border-radius:11px"></div>
<div class="t" style="left:1413.80px;top:462.22px;font-size:12.5px;color:#fff;">On</div>
<svg style="position:absolute;left:1433px;top:461.8px;" width="11" height="11" viewBox="0 0 11 11" fill="none"><circle cx="5.3" cy="5.3" r="5" fill="#fff"/></svg>
<svg style="position:absolute;left:1167px;top:512.6px;" width="10" height="16" viewBox="0 0 10 16" fill="none"><path d="M1.5 1l7 7.5-7 7.5" stroke="#252423" stroke-width="1.4"/></svg>
<div class="t" style="left:1186.00px;top:514.39px;font-size:15.6px;font-weight:bold;color:#252423;">Alt text</div>
<svg style="position:absolute;left:1167px;top:566.8px;" width="10" height="16" viewBox="0 0 10 16" fill="none"><path d="M1.5 1l7 7.5-7 7.5" stroke="#252423" stroke-width="1.4"/></svg>
<div class="t" style="left:1186.00px;top:568.59px;font-size:15.6px;font-weight:bold;color:#252423;">Advanced options</div>
<div style="position:absolute;left:1153px;top:384.5px;width:308px;height:1px;background:#e1dfdd"></div>
<div style="position:absolute;left:1153px;top:438.6px;width:308px;height:1px;background:#e1dfdd"></div>
<div style="position:absolute;left:1153px;top:493.7px;width:308px;height:1px;background:#e1dfdd"></div>
<div style="position:absolute;left:1153px;top:547.9px;width:308px;height:1px;background:#e1dfdd"></div>
<div style="position:absolute;left:1153px;top:602.6px;width:308px;height:1px;background:#e1dfdd"></div>
<div class="t" style="left:1473.50px;top:183.77px;font-size:20px;font-weight:bold;color:#252423;">Build</div>
<svg style="position:absolute;left:1644.2px;top:190.3px;" width="20" height="4" viewBox="0 0 20 4" fill="none"><circle cx="2" cy="2" r="1.5" fill="#252423"/><circle cx="10" cy="2" r="1.5" fill="#252423"/><circle cx="18" cy="2" r="1.5" fill="#252423"/></svg>
<svg style="position:absolute;left:1675px;top:183.5px;" width="17" height="17" viewBox="0 0 17 17" fill="none"><path d="M1 1l7.5 7.5L1 16M8 1l7.5 7.5L8 16" stroke="#323130" stroke-width="1.2"/></svg>
<div class="t" style="left:1473.00px;top:221.05px;font-size:15.3px;color:#323130;">Suggestions</div>
<div style="position:absolute;left:1473px;top:244px;width:219px;height:285px;background:#fff;border:1px solid #a19f9d;border-radius:3px;box-sizing:border-box"></div>
<div style="position:absolute;left:1695px;top:217px;width:7px;height:686px;background:#858585;border-radius:3.5px"></div>
<div class="t" style="left:1473.00px;top:543.85px;font-size:15.3px;color:#323130;">Y-axis</div>
<div style="position:absolute;left:1472.5px;top:567.5px;width:220px;height:141px;background:#fff;border:1px dashed #8a8886;border-radius:2px;box-sizing:border-box"></div>
<div style="position:absolute;left:1479.3px;top:573.4px;width:205.5px;height:39px;background:#faf9f8;border:1px solid #8a8886;border-radius:4px;box-sizing:border-box"></div>
<div class="t" style="left:1487.90px;top:586.95px;font-size:15.3px;color:#252423;">Country</div>
<svg style="position:absolute;left:1618px;top:585.4px;" width="17" height="17" viewBox="0 0 17 17" fill="none"><path d="M1.5 1.5l14 14M15.5 1.5l-14 14" stroke="#252423" stroke-width="1.5"/></svg>
<div style="position:absolute;left:1646px;top:582.9px;width:1px;height:20.5px;background:#8a8886"></div>
<svg style="position:absolute;left:1662.5px;top:585.4px;" width="10" height="16" viewBox="0 0 10 16" fill="none"><path d="M1.5 1l7 7.5-7 7.5" stroke="#252423" stroke-width="1.3"/></svg>
<div style="position:absolute;left:1479.3px;top:618.5px;width:205.5px;height:39px;background:#faf9f8;border:1px solid #8a8886;border-radius:4px;box-sizing:border-box"></div>
<div class="t" style="left:1487.90px;top:632.05px;font-size:15.3px;color:#252423;">Year</div>
<svg style="position:absolute;left:1618px;top:630.5px;" width="17" height="17" viewBox="0 0 17 17" fill="none"><path d="M1.5 1.5l14 14M15.5 1.5l-14 14" stroke="#252423" stroke-width="1.5"/></svg>
<div style="position:absolute;left:1646px;top:628.0px;width:1px;height:20.5px;background:#8a8886"></div>
<svg style="position:absolute;left:1662.5px;top:630.5px;" width="10" height="16" viewBox="0 0 10 16" fill="none"><path d="M1.5 1l7 7.5-7 7.5" stroke="#252423" stroke-width="1.3"/></svg>
<svg style="position:absolute;left:1472px;top:624px;" width="80" height="31" viewBox="0 0 80 31" fill="none"><path d="M1.5 3.5 C20 0.5 60 0.5 77.5 1.5 C79 9 79 20 78.5 27 C60 26.5 40 28 20 28.5 L19 30 C12 29.5 6 29.5 2 29.5 C0.5 21 0.5 10 1.5 3.5z" fill="#fde800"/></svg>
<div class="t" style="left:1487.90px;top:632.05px;font-size:15.3px;color:#252423;">Year</div>
<div style="position:absolute;left:1479.3px;top:663.3px;width:205.5px;height:39px;background:#fff;border:1px solid #8a8886;border-radius:4px;box-sizing:border-box"></div>
<div class="t" style="left:1582.00px;top:675.95px;font-size:15.3px;font-weight:bold;color:#252423;transform:translateX(-50%);">+Add data</div>
<div class="t" style="left:1473.00px;top:723.75px;font-size:15.3px;color:#323130;">X-axis</div>
<div style="position:absolute;left:1472.5px;top:746.3px;width:220px;height:97px;background:#fff;border:1px dashed #8a8886;border-radius:2px;box-sizing:border-box"></div>
<div style="position:absolute;left:1479.3px;top:753.3px;width:205.5px;height:39px;background:#faf9f8;border:1px solid #8a8886;border-radius:4px;box-sizing:border-box"></div>
<div class="t" style="left:1487.90px;top:766.85px;font-size:15.3px;color:#252423;">Sum of GDP (B...</div>
<svg style="position:absolute;left:1618px;top:765.3px;" width="17" height="17" viewBox="0 0 17 17" fill="none"><path d="M1.5 1.5l14 14M15.5 1.5l-14 14" stroke="#252423" stroke-width="1.5"/></svg>
<div style="position:absolute;left:1646px;top:762.8px;width:1px;height:20.5px;background:#8a8886"></div>
<svg style="position:absolute;left:1662.5px;top:765.3px;" width="10" height="16" viewBox="0 0 10 16" fill="none"><path d="M1.5 1l7 7.5-7 7.5" stroke="#252423" stroke-width="1.3"/></svg>
<div style="position:absolute;left:1479.3px;top:798px;width:205.5px;height:39px;background:#fff;border:1px solid #8a8886;border-radius:4px;box-sizing:border-box"></div>
<div class="t" style="left:1582.00px;top:810.65px;font-size:15.3px;font-weight:bold;color:#252423;transform:translateX(-50%);">+Add data</div>
<div class="t" style="left:1473.00px;top:858.55px;font-size:15.3px;color:#323130;">Legend</div>
<div style="position:absolute;left:1472.5px;top:881px;width:220px;height:51.5px;background:#fff;border:1px dashed #8a8886;border-radius:2px;box-sizing:border-box"></div>
<div style="position:absolute;left:1479.3px;top:887.5px;width:205.5px;height:39px;background:#fff;border:1px solid #8a8886;border-radius:4px;box-sizing:border-box"></div>
<div class="t" style="left:1582.00px;top:900.15px;font-size:15.3px;font-weight:bold;color:#252423;transform:translateX(-50%);">+Add data</div>
<div class="t" style="left:1473.00px;top:947.85px;font-size:15.3px;color:#323130;">Small multiples</div>
<div style="position:absolute;left:1462px;top:968px;width:240px;height:33px;overflow:hidden">
<div style="position:absolute;left:10.5px;top:3px;width:220px;height:60px;background:#fff;border:1px dashed #8a8886;border-radius:2px;box-sizing:border-box"></div>
<div style="position:absolute;left:17.3px;top:9.3px;width:205.5px;height:39px;background:#fff;border:1px solid #8a8886;border-radius:4px;box-sizing:border-box"></div>
<div class="t" style="left:120.00px;top:22.05px;font-size:15.3px;font-weight:bold;color:#252423;transform:translateX(-50%);">+Add data</div>
</div>
<div class="t" style="left:1715.50px;top:183.77px;font-size:20px;font-weight:bold;color:#252423;">Data</div>
<svg style="position:absolute;left:1886px;top:190.3px;" width="20" height="4" viewBox="0 0 20 4" fill="none"><circle cx="2" cy="2" r="1.5" fill="#252423"/><circle cx="10" cy="2" r="1.5" fill="#252423"/><circle cx="18" cy="2" r="1.5" fill="#252423"/></svg>
<svg style="position:absolute;left:1916px;top:183.5px;" width="17" height="17" viewBox="0 0 17 17" fill="none"><path d="M1 1l7.5 7.5L1 16" stroke="#323130" stroke-width="1.2"/></svg>
<div style="position:absolute;left:1709.5px;top:228.6px;width:230px;height:31px;background:#fff;border:1px solid #d2d0ce;border-bottom:1.5px solid #8a8886;border-radius:4px;box-sizing:border-box"></div>
<svg style="position:absolute;left:1724px;top:233px;" width="22" height="22" viewBox="0 0 22 22" fill="none"><circle cx="9" cy="9" r="6.5" stroke="#323130" stroke-width="1.4"/><path d="M13.6 13.6L19.5 19.5" stroke="#323130" stroke-width="1.4"/></svg>
<div class="t" style="left:1754.80px;top:237.61px;font-size:17px;color:#605e5c;">Search</div>
<svg style="position:absolute;left:1722.5px;top:281.0px;" width="11" height="16" viewBox="0 0 11 16" fill="none"><path d="M1.5 1l7.5 7-7.5 7" stroke="#323130" stroke-width="1.3"/></svg>
<svg style="position:absolute;left:1742.5px;top:280.5px;" width="18" height="18" viewBox="0 0 18 18" fill="none"><rect x="1" y="1" width="14" height="14" rx="2.5" stroke="#323130" stroke-width="1.5"/><path d="M1 5.5h14M1 10.5h14M5.5 1v14M10.5 1v14" stroke="#323130" stroke-width="1.5"/></svg>
<div class="t" style="left:1767.00px;top:282.05px;font-size:15.3px;color:#252423;">Ashishdata</div>
<svg style="position:absolute;left:1722.5px;top:313.07px;" width="11" height="16" viewBox="0 0 11 16" fill="none"><path d="M1.5 1l7.5 7-7.5 7" stroke="#323130" stroke-width="1.3"/></svg>
<svg style="position:absolute;left:1742.5px;top:312.57px;" width="18" height="18" viewBox="0 0 18 18" fill="none"><rect x="1" y="1" width="14" height="14" rx="2.5" stroke="#323130" stroke-width="1.5"/><path d="M1 5.5h14M1 10.5h14M5.5 1v14M10.5 1v14" stroke="#323130" stroke-width="1.5"/></svg>
<div class="t" style="left:1767.00px;top:314.12px;font-size:15.3px;color:#252423;">Branch details</div>
<svg style="position:absolute;left:1722.5px;top:345.14px;" width="11" height="16" viewBox="0 0 11 16" fill="none"><path d="M1.5 1l7.5 7-7.5 7" stroke="#323130" stroke-width="1.3"/></svg>
<svg style="position:absolute;left:1742.5px;top:344.64px;" width="18" height="18" viewBox="0 0 18 18" fill="none"><g transform="scale(1.08)"><path d="M9 1H3.5Q1 1 1 3.5v10Q1 15 3 15h4M1 5.5h12M1 10h6M5.5 1v14M10 1v4" stroke="#323130" stroke-width="1.4"/><rect x="8.2" y="7.5" width="8" height="9.5" rx="1" fill="#323130"/><path d="M9.8 11h1.2M12 11h1.2M14.1 11h1M9.8 13.3h1.2M12 13.3h1.2M14.1 13.3h1M9.8 15.4h1.2M12 15.4h1.2M14.1 15.4h1" stroke="#fff" stroke-width="1"/><rect x="9.5" y="8.5" width="5.5" height="1.4" fill="#fff"/></g></svg>
<div class="t" style="left:1767.00px;top:346.19px;font-size:15.3px;color:#252423;">Calculated Table</div>
<svg style="position:absolute;left:1722.5px;top:377.21000000000004px;" width="11" height="16" viewBox="0 0 11 16" fill="none"><path d="M1.5 1l7.5 7-7.5 7" stroke="#323130" stroke-width="1.3"/></svg>
<svg style="position:absolute;left:1742.5px;top:376.71000000000004px;" width="18" height="18" viewBox="0 0 18 18" fill="none"><g transform="scale(1.08)"><path d="M9 1H3.5Q1 1 1 3.5v10Q1 15 3 15h4M1 5.5h12M1 10h6M5.5 1v14M10 1v4" stroke="#323130" stroke-width="1.4"/><rect x="8.2" y="7.5" width="8" height="9.5" rx="1" fill="#323130"/><path d="M9.8 11h1.2M12 11h1.2M14.1 11h1M9.8 13.3h1.2M12 13.3h1.2M14.1 13.3h1M9.8 15.4h1.2M12 15.4h1.2M14.1 15.4h1" stroke="#fff" stroke-width="1"/><rect x="9.5" y="8.5" width="5.5" height="1.4" fill="#fff"/></g></svg>
<div class="t" style="left:1767.00px;top:378.26px;font-size:15.3px;color:#252423;">Class</div>
<svg style="position:absolute;left:1720px;top:414.28px;" width="18" height="10" viewBox="0 0 18 10" fill="none"><path d="M1 1l8 8 8-8" stroke="#323130" stroke-width="1.3"/></svg>
<svg style="position:absolute;left:1742.5px;top:408.78px;" width="18" height="18" viewBox="0 0 18 18" fill="none"><rect x="1" y="1" width="14" height="14" rx="2.5" stroke="#323130" stroke-width="1.5"/><path d="M1 5.5h14M1 10.5h14M5.5 1v14M10.5 1v14" stroke="#323130" stroke-width="1.5"/></svg>
<div class="t" style="left:1767.00px;top:410.33px;font-size:15.3px;color:#252423;">Countries</div>
<svg style="position:absolute;left:1750.5px;top:416.28px;" width="17" height="17" viewBox="0 0 17 17" fill="none"><circle cx="8" cy="8" r="7.7" fill="#117865"/><path d="M4.5 8.2l2.3 2.3 4.5-4.7" stroke="#fff" stroke-width="1.6"/></svg>
<svg style="position:absolute;left:1762.5px;top:441.85px;" width="16" height="16" viewBox="0 0 16 16" fill="none"><rect x="0.7" y="0.7" width="14.6" height="14.6" rx="2.5" fill="#faf9f8" stroke="#a19f9d" stroke-width="1.2"/></svg>
<svg style="position:absolute;left:1789.5px;top:441.35px;" width="16" height="17" viewBox="0 0 16 17" fill="none"><path d="M14.5 3.5V1H1.5l7 7.5-7 7.5h13v-2.5" stroke="#323130" stroke-width="1.4" stroke-linejoin="miter"/></svg>
<div class="t" style="left:1814.00px;top:442.40px;font-size:15.3px;color:#252423;">Area (sq km)</div>
<svg style="position:absolute;left:1762.5px;top:473.92px;" width="16" height="16" viewBox="0 0 16 16" fill="none"><rect x="0.2" y="0.2" width="15.6" height="15.6" rx="2.5" fill="#117865"/><path d="M3.5 8.2l3 3 6-6.2" stroke="#fff" stroke-width="1.5"/></svg>
<div class="t" style="left:1814.00px;top:474.47px;font-size:15.3px;color:#252423;">Country</div>
<svg style="position:absolute;left:1762.5px;top:505.99px;" width="16" height="16" viewBox="0 0 16 16" fill="none"><rect x="0.2" y="0.2" width="15.6" height="15.6" rx="2.5" fill="#117865"/><path d="M3.5 8.2l3 3 6-6.2" stroke="#fff" stroke-width="1.5"/></svg>
<svg style="position:absolute;left:1789.5px;top:505.49px;" width="16" height="17" viewBox="0 0 16 17" fill="none"><path d="M14.5 3.5V1H1.5l7 7.5-7 7.5h13v-2.5" stroke="#323130" stroke-width="1.4" stroke-linejoin="miter"/></svg>
<div class="t" style="left:1814.00px;top:506.54px;font-size:15.3px;color:#252423;">GDP (Billion U...</div>
<svg style="position:absolute;left:1762.5px;top:538.06px;" width="16" height="16" viewBox="0 0 16 16" fill="none"><rect x="0.7" y="0.7" width="14.6" height="14.6" rx="2.5" fill="#faf9f8" stroke="#a19f9d" stroke-width="1.2"/></svg>
<svg style="position:absolute;left:1789.5px;top:537.56px;" width="16" height="17" viewBox="0 0 16 17" fill="none"><path d="M14.5 3.5V1H1.5l7 7.5-7 7.5h13v-2.5" stroke="#323130" stroke-width="1.4" stroke-linejoin="miter"/></svg>
<div class="t" style="left:1814.00px;top:538.61px;font-size:15.3px;color:#252423;">Literacy Rate (...</div>
<svg style="position:absolute;left:1762.5px;top:570.13px;" width="16" height="16" viewBox="0 0 16 16" fill="none"><rect x="0.7" y="0.7" width="14.6" height="14.6" rx="2.5" fill="#faf9f8" stroke="#a19f9d" stroke-width="1.2"/></svg>
<svg style="position:absolute;left:1789.5px;top:569.63px;" width="16" height="17" viewBox="0 0 16 17" fill="none"><path d="M14.5 3.5V1H1.5l7 7.5-7 7.5h13v-2.5" stroke="#323130" stroke-width="1.4" stroke-linejoin="miter"/></svg>
<div class="t" style="left:1814.00px;top:570.68px;font-size:15.3px;color:#252423;">Population (M...</div>
<svg style="position:absolute;left:1762.5px;top:602.2px;" width="16" height="16" viewBox="0 0 16 16" fill="none"><rect x="0.7" y="0.7" width="14.6" height="14.6" rx="2.5" fill="#faf9f8" stroke="#a19f9d" stroke-width="1.2"/></svg>
<svg style="position:absolute;left:1789px;top:601.2px;" width="17" height="18" viewBox="0 0 17 18" fill="none"><rect x="2" y="1" width="13" height="15.5" rx="2" stroke="#323130" stroke-width="1.3"/><rect x="4.5" y="3.5" width="8" height="3" stroke="#323130" stroke-width="1.1"/><path d="M5 9.3h1.4M8 9.3h1.4M11 9.3h1.4M5 12h1.4M8 12h1.4M11 12h1.4M5 14.4h1.4M8 14.4h1.4M11 14.4h1.4" stroke="#323130" stroke-width="1.6"/></svg>
<div class="t" style="left:1814.00px;top:602.75px;font-size:15.3px;color:#252423;">Selected Coun...</div>
<svg style="position:absolute;left:1762.5px;top:634.27px;" width="16" height="16" viewBox="0 0 16 16" fill="none"><rect x="0.2" y="0.2" width="15.6" height="15.6" rx="2.5" fill="#117865"/><path d="M3.5 8.2l3 3 6-6.2" stroke="#fff" stroke-width="1.5"/></svg>
<svg style="position:absolute;left:1789.5px;top:633.77px;" width="16" height="17" viewBox="0 0 16 17" fill="none"><path d="M14.5 3.5V1H1.5l7 7.5-7 7.5h13v-2.5" stroke="#323130" stroke-width="1.4" stroke-linejoin="miter"/></svg>
<div class="t" style="left:1814.00px;top:634.82px;font-size:15.3px;color:#252423;">Year</div>
<svg style="position:absolute;left:1908px;top:640.77px;" width="20" height="4" viewBox="0 0 20 4" fill="none"><circle cx="2" cy="2" r="1.5" fill="#252423"/><circle cx="10" cy="2" r="1.5" fill="#252423"/><circle cx="18" cy="2" r="1.5" fill="#252423"/></svg>
<svg style="position:absolute;left:1722.5px;top:665.84px;" width="11" height="16" viewBox="0 0 11 16" fill="none"><path d="M1.5 1l7.5 7-7.5 7" stroke="#323130" stroke-width="1.3"/></svg>
<svg style="position:absolute;left:1742.5px;top:665.34px;" width="18" height="18" viewBox="0 0 18 18" fill="none"><g transform="scale(1.08)"><path d="M9 1H3.5Q1 1 1 3.5v10Q1 15 3 15h4M1 5.5h12M1 10h6M5.5 1v14M10 1v4" stroke="#323130" stroke-width="1.4"/><rect x="8.2" y="7.5" width="8" height="9.5" rx="1" fill="#323130"/><path d="M9.8 11h1.2M12 11h1.2M14.1 11h1M9.8 13.3h1.2M12 13.3h1.2M14.1 13.3h1M9.8 15.4h1.2M12 15.4h1.2M14.1 15.4h1" stroke="#fff" stroke-width="1"/><rect x="9.5" y="8.5" width="5.5" height="1.4" fill="#fff"/></g></svg>
<div class="t" style="left:1767.00px;top:666.89px;font-size:15.3px;color:#252423;">Countries Average T...</div>
<svg style="position:absolute;left:1722.5px;top:697.9100000000001px;" width="11" height="16" viewBox="0 0 11 16" fill="none"><path d="M1.5 1l7.5 7-7.5 7" stroke="#323130" stroke-width="1.3"/></svg>
<svg style="position:absolute;left:1742.5px;top:697.4100000000001px;" width="18" height="18" viewBox="0 0 18 18" fill="none"><rect x="1" y="1" width="14" height="14" rx="2.5" stroke="#323130" stroke-width="1.5"/><path d="M1 5.5h14M1 10.5h14M5.5 1v14M10.5 1v14" stroke="#323130" stroke-width="1.5"/></svg>
<div class="t" style="left:1767.00px;top:698.96px;font-size:15.3px;color:#252423;">Countrylist</div>
<svg style="position:absolute;left:1722.5px;top:729.98px;" width="11" height="16" viewBox="0 0 11 16" fill="none"><path d="M1.5 1l7.5 7-7.5 7" stroke="#323130" stroke-width="1.3"/></svg>
<svg style="position:absolute;left:1742.5px;top:729.48px;" width="18" height="18" viewBox="0 0 18 18" fill="none"><rect x="1" y="1" width="14" height="14" rx="2.5" stroke="#323130" stroke-width="1.5"/><path d="M1 5.5h14M1 10.5h14M5.5 1v14M10.5 1v14" stroke="#323130" stroke-width="1.5"/></svg>
<div class="t" style="left:1767.00px;top:731.03px;font-size:15.3px;color:#252423;">Customers</div>
<svg style="position:absolute;left:1722.5px;top:762.05px;" width="11" height="16" viewBox="0 0 11 16" fill="none"><path d="M1.5 1l7.5 7-7.5 7" stroke="#323130" stroke-width="1.3"/></svg>
<svg style="position:absolute;left:1742.5px;top:761.55px;" width="18" height="18" viewBox="0 0 18 18" fill="none"><rect x="1" y="1" width="14" height="14" rx="2.5" stroke="#323130" stroke-width="1.5"/><path d="M1 5.5h14M1 10.5h14M5.5 1v14M10.5 1v14" stroke="#323130" stroke-width="1.5"/></svg>
<div class="t" style="left:1767.00px;top:763.10px;font-size:15.3px;color:#252423;">CustomersData</div>
<svg style="position:absolute;left:1722.5px;top:794.12px;" width="11" height="16" viewBox="0 0 11 16" fill="none"><path d="M1.5 1l7.5 7-7.5 7" stroke="#323130" stroke-width="1.3"/></svg>
<svg style="position:absolute;left:1742.5px;top:793.62px;" width="18" height="18" viewBox="0 0 18 18" fill="none"><rect x="1" y="1" width="14" height="14" rx="2.5" stroke="#323130" stroke-width="1.5"/><path d="M1 5.5h14M1 10.5h14M5.5 1v14M10.5 1v14" stroke="#323130" stroke-width="1.5"/></svg>
<div class="t" style="left:1767.00px;top:795.17px;font-size:15.3px;color:#252423;">Data1</div>
<svg style="position:absolute;left:1722.5px;top:826.19px;" width="11" height="16" viewBox="0 0 11 16" fill="none"><path d="M1.5 1l7.5 7-7.5 7" stroke="#323130" stroke-width="1.3"/></svg>
<svg style="position:absolute;left:1742.5px;top:825.69px;" width="18" height="18" viewBox="0 0 18 18" fill="none"><rect x="1" y="1" width="14" height="14" rx="2.5" stroke="#323130" stroke-width="1.5"/><path d="M1 5.5h14M1 10.5h14M5.5 1v14M10.5 1v14" stroke="#323130" stroke-width="1.5"/></svg>
<div class="t" style="left:1767.00px;top:827.24px;font-size:15.3px;color:#252423;">Data2</div>
<svg style="position:absolute;left:1722.5px;top:858.26px;" width="11" height="16" viewBox="0 0 11 16" fill="none"><path d="M1.5 1l7.5 7-7.5 7" stroke="#323130" stroke-width="1.3"/></svg>
<svg style="position:absolute;left:1742.5px;top:857.76px;" width="18" height="18" viewBox="0 0 18 18" fill="none"><g transform="scale(1.08)"><path d="M9 1H3.5Q1 1 1 3.5v10Q1 15 3 15h4M1 5.5h12M1 10h6M5.5 1v14M10 1v4" stroke="#323130" stroke-width="1.4"/><rect x="8.2" y="7.5" width="8" height="9.5" rx="1" fill="#323130"/><path d="M9.8 11h1.2M12 11h1.2M14.1 11h1M9.8 13.3h1.2M12 13.3h1.2M14.1 13.3h1M9.8 15.4h1.2M12 15.4h1.2M14.1 15.4h1" stroke="#fff" stroke-width="1"/><rect x="9.5" y="8.5" width="5.5" height="1.4" fill="#fff"/></g></svg>
<div class="t" style="left:1767.00px;top:859.31px;font-size:15.3px;color:#252423;">DATESBETWEEN Table</div>
<svg style="position:absolute;left:1722.5px;top:890.33px;" width="11" height="16" viewBox="0 0 11 16" fill="none"><path d="M1.5 1l7.5 7-7.5 7" stroke="#323130" stroke-width="1.3"/></svg>
<svg style="position:absolute;left:1742.5px;top:889.83px;" width="18" height="18" viewBox="0 0 18 18" fill="none"><g transform="scale(1.08)"><path d="M9 1H3.5Q1 1 1 3.5v10Q1 15 3 15h4M1 5.5h12M1 10h6M5.5 1v14M10 1v4" stroke="#323130" stroke-width="1.4"/><rect x="8.2" y="7.5" width="8" height="9.5" rx="1" fill="#323130"/><path d="M9.8 11h1.2M12 11h1.2M14.1 11h1M9.8 13.3h1.2M12 13.3h1.2M14.1 13.3h1M9.8 15.4h1.2M12 15.4h1.2M14.1 15.4h1" stroke="#fff" stroke-width="1"/><rect x="9.5" y="8.5" width="5.5" height="1.4" fill="#fff"/></g></svg>
<div class="t" style="left:1767.00px;top:891.38px;font-size:15.3px;color:#252423;">DATESINPERIOD Table</div>
<svg style="position:absolute;left:1722.5px;top:922.4px;" width="11" height="16" viewBox="0 0 11 16" fill="none"><path d="M1.5 1l7.5 7-7.5 7" stroke="#323130" stroke-width="1.3"/></svg>
<svg style="position:absolute;left:1742.5px;top:921.9px;" width="18" height="18" viewBox="0 0 18 18" fill="none"><g transform="scale(1.08)"><path d="M9 1H3.5Q1 1 1 3.5v10Q1 15 3 15h4M1 5.5h12M1 10h6M5.5 1v14M10 1v4" stroke="#323130" stroke-width="1.4"/><rect x="8.2" y="7.5" width="8" height="9.5" rx="1" fill="#323130"/><path d="M9.8 11h1.2M12 11h1.2M14.1 11h1M9.8 13.3h1.2M12 13.3h1.2M14.1 13.3h1M9.8 15.4h1.2M12 15.4h1.2M14.1 15.4h1" stroke="#fff" stroke-width="1"/><rect x="9.5" y="8.5" width="5.5" height="1.4" fill="#fff"/></g></svg>
<div class="t" style="left:1767.00px;top:923.45px;font-size:15.3px;color:#252423;">DATESMTD Table</div>
<svg style="position:absolute;left:1722.5px;top:954.47px;" width="11" height="16" viewBox="0 0 11 16" fill="none"><path d="M1.5 1l7.5 7-7.5 7" stroke="#323130" stroke-width="1.3"/></svg>
<svg style="position:absolute;left:1742.5px;top:953.97px;" width="18" height="18" viewBox="0 0 18 18" fill="none"><rect x="1" y="1" width="14" height="14" rx="2.5" stroke="#323130" stroke-width="1.5"/><path d="M1 5.5h14M1 10.5h14M5.5 1v14M10.5 1v14" stroke="#323130" stroke-width="1.5"/></svg>
<div class="t" style="left:1767.00px;top:955.52px;font-size:15.3px;color:#252423;">df</div>
<svg style="position:absolute;left:1722.5px;top:986.54px;" width="11" height="16" viewBox="0 0 11 16" fill="none"><path d="M1.5 1l7.5 7-7.5 7" stroke="#323130" stroke-width="1.3"/></svg>
<svg style="position:absolute;left:1742.5px;top:986.04px;" width="18" height="18" viewBox="0 0 18 18" fill="none"><g transform="scale(1.08)"><path d="M9 1H3.5Q1 1 1 3.5v10Q1 15 3 15h4M1 5.5h12M1 10h6M5.5 1v14M10 1v4" stroke="#323130" stroke-width="1.4"/><rect x="8.2" y="7.5" width="8" height="9.5" rx="1" fill="#323130"/><path d="M9.8 11h1.2M12 11h1.2M14.1 11h1M9.8 13.3h1.2M12 13.3h1.2M14.1 13.3h1M9.8 15.4h1.2M12 15.4h1.2M14.1 15.4h1" stroke="#fff" stroke-width="1"/><rect x="9.5" y="8.5" width="5.5" height="1.4" fill="#fff"/></g></svg>
<div class="t" style="left:1767.00px;top:987.59px;font-size:15.3px;color:#252423;">DISTINCT Values Table</div>
<div style="position:absolute;left:1548.5px;top:249.3px;width:32px;height:31.7px;border:1.5px solid #797775;box-sizing:border-box;background:#fff"></div>
<svg style="position:absolute;left:1483.20px;top:252.20px;overflow:visible" width="24.5" height="24.5" viewBox="0 0 24 24" fill="none"><path d="M1 0V23H24" fill="none" stroke="#3b3a39" stroke-width="1.7" /><rect x="1.8" y="3" width="5" height="6" fill="#fafafa" stroke="#3b3a39" stroke-width="1.5"/><rect x="6.8" y="3" width="8" height="6" fill="#86bdec" stroke="#1169c2" stroke-width="1.5"/><rect x="1.8" y="13" width="8" height="6" fill="#fafafa" stroke="#3b3a39" stroke-width="1.5"/><rect x="9.8" y="13" width="9.5" height="6" fill="#c8c6c4" stroke="#8a8886" stroke-width="1.5"/></svg>
<svg style="position:absolute;left:1517.70px;top:252.20px;overflow:visible" width="24.5" height="24.5" viewBox="0 0 24 24" fill="none"><path d="M1 0V23H24" fill="none" stroke="#3b3a39" stroke-width="1.7" /><rect x="4" y="8" width="6" height="9" fill="#86bdec" stroke="#1169c2" stroke-width="1.5"/><rect x="4" y="17" width="6" height="6" fill="#fafafa" stroke="#3b3a39" stroke-width="1.5"/><rect x="14" y="3" width="6" height="10" fill="#c8c6c4" stroke="#8a8886" stroke-width="1.5"/><rect x="14" y="13" width="6" height="10" fill="#fafafa" stroke="#3b3a39" stroke-width="1.5"/></svg>
<svg style="position:absolute;left:1552.20px;top:252.20px;overflow:visible" width="24.5" height="24.5" viewBox="0 0 24 24" fill="none"><path d="M1 0V23H24" fill="none" stroke="#3b3a39" stroke-width="1.7" /><rect x="1.8" y="1.5" width="20" height="5" fill="#86bdec" stroke="#1169c2" stroke-width="1.5"/><rect x="1.8" y="6.5" width="12.5" height="5" fill="#fafafa" stroke="#3b3a39" stroke-width="1.5"/><rect x="1.8" y="11.5" width="9.5" height="4.5" fill="#c8c6c4" stroke="#8a8886" stroke-width="1.5"/><rect x="1.8" y="16" width="14" height="4.5" fill="#fafafa" stroke="#3b3a39" stroke-width="1.5"/><path d="M2 22.5H24" fill="none" stroke="#3b3a39" stroke-width="1.2" /></svg>
<svg style="position:absolute;left:1586.70px;top:252.20px;overflow:visible" width="24.5" height="24.5" viewBox="0 0 24 24" fill="none"><path d="M1 0V23H24" fill="none" stroke="#3b3a39" stroke-width="1.7" /><rect x="2.5" y="1.5" width="5" height="21.5" fill="#86bdec" stroke="#1169c2" stroke-width="1.5"/><rect x="7.5" y="9" width="5" height="14" fill="#fafafa" stroke="#3b3a39" stroke-width="1.5"/><rect x="12.5" y="12" width="5" height="11" fill="#c8c6c4" stroke="#8a8886" stroke-width="1.5"/><rect x="17.5" y="6" width="5" height="17" fill="#fafafa" stroke="#3b3a39" stroke-width="1.5"/></svg>
<svg style="position:absolute;left:1621.20px;top:252.20px;overflow:visible" width="24.5" height="24.5" viewBox="0 0 24 24" fill="none"><path d="M1 0V23H24" fill="none" stroke="#3b3a39" stroke-width="1.7" /><rect x="1.8" y="3" width="5" height="6" fill="#fafafa" stroke="#3b3a39" stroke-width="1.5"/><rect x="6.8" y="3" width="14.5" height="6" fill="#86bdec" stroke="#1169c2" stroke-width="1.5"/><rect x="1.8" y="13" width="14" height="6" fill="#fafafa" stroke="#3b3a39" stroke-width="1.5"/><rect x="15.8" y="13" width="5.5" height="6" fill="#c8c6c4" stroke="#8a8886" stroke-width="1.5"/></svg>
<svg style="position:absolute;left:1655.70px;top:252.20px;overflow:visible" width="24.5" height="24.5" viewBox="0 0 24 24" fill="none"><path d="M1 0V23H24" fill="none" stroke="#3b3a39" stroke-width="1.7" /><rect x="4" y="3" width="6" height="14" fill="#86bdec" stroke="#1169c2" stroke-width="1.5"/><rect x="4" y="17" width="6" height="6" fill="#fafafa" stroke="#3b3a39" stroke-width="1.5"/><rect x="14" y="3" width="6" height="5" fill="#c8c6c4" stroke="#8a8886" stroke-width="1.5"/><rect x="14" y="8" width="6" height="15" fill="#fafafa" stroke="#3b3a39" stroke-width="1.5"/></svg>
<svg style="position:absolute;left:1483.20px;top:286.85px;overflow:visible" width="24.5" height="24.5" viewBox="0 0 24 24" fill="none"><path d="M1 0V23H24" fill="none" stroke="#3b3a39" stroke-width="1.7" /><path d="M1.5 13L8 7.5L13.5 12.5L22 5" fill="none" stroke="#3b3a39" stroke-width="1.6" /><path d="M1.5 18.5L13 5.5L21.5 13" fill="none" stroke="#1169c2" stroke-width="1.6" /></svg>
<svg style="position:absolute;left:1517.70px;top:286.85px;overflow:visible" width="24.5" height="24.5" viewBox="0 0 24 24" fill="none"><path d="M14 2L21.5 9V23H14Z" fill="#c8c6c4" stroke="#8a8886" stroke-width="1.2" /><path d="M1 15L8 3L15 14" fill="#fafafa" stroke="#3b3a39" stroke-width="1.6" /><path d="M1 15L6 19L13 9.5L21.5 23H1Z" fill="#86bdec" stroke="#1169c2" stroke-width="1.6" /></svg>
<svg style="position:absolute;left:1552.20px;top:286.85px;overflow:visible" width="24.5" height="24.5" viewBox="0 0 24 24" fill="none"><path d="M1 0V23H24" fill="none" stroke="#3b3a39" stroke-width="1.7" /><path d="M1 2L9 10L15 3.5L19 7.5H23V19L15 10.5L9 17.5L1 10Z" fill="#86bdec" stroke="#1169c2" stroke-width="1.6" /></svg>
<svg style="position:absolute;left:1586.70px;top:286.85px;overflow:visible" width="24.5" height="24.5" viewBox="0 0 24 24" fill="none"><path d="M1 0V23H24" fill="none" stroke="#3b3a39" stroke-width="1.7" /><path d="M1.5 2.5H23V17L16 10L9 17L1.5 9Z" fill="#86bdec" stroke="#1169c2" stroke-width="1.6" /></svg>
<svg style="position:absolute;left:1621.20px;top:286.85px;overflow:visible" width="24.5" height="24.5" viewBox="0 0 24 24" fill="none"><path d="M1 0V23H24" fill="none" stroke="#3b3a39" stroke-width="1.7" /><rect x="5" y="2" width="5" height="14" fill="#86bdec" stroke="#1169c2" stroke-width="1.5"/><rect x="5" y="16" width="5" height="7" fill="#fafafa" stroke="#3b3a39" stroke-width="1.5"/><rect x="15" y="2" width="5" height="6" fill="#c8c6c4" stroke="#8a8886" stroke-width="1.5"/><rect x="15" y="8" width="5" height="15" fill="#fafafa" stroke="#3b3a39" stroke-width="1.5"/><path d="M1.5 22L8.5 12L14 19L23.5 8.5" fill="none" stroke="#3b3a39" stroke-width="1.5" /></svg>
<svg style="position:absolute;left:1655.70px;top:286.85px;overflow:visible" width="24.5" height="24.5" viewBox="0 0 24 24" fill="none"><path d="M1 0V23H24" fill="none" stroke="#3b3a39" stroke-width="1.7" /><rect x="4" y="10" width="5" height="13" fill="#86bdec" stroke="#1169c2" stroke-width="1.5"/><rect x="9" y="1" width="5" height="22" fill="#fafafa" stroke="#3b3a39" stroke-width="1.5"/><rect x="14" y="6" width="5" height="17" fill="#c8c6c4" stroke="#8a8886" stroke-width="1.5"/><path d="M1.5 23L9 11.5L14 18L23.5 8.5" fill="none" stroke="#3b3a39" stroke-width="1.5" /></svg>
<svg style="position:absolute;left:1483.20px;top:321.50px;overflow:visible" width="24.5" height="24.5" viewBox="0 0 24 24" fill="none"><path d="M1 0V23H24" fill="none" stroke="#3b3a39" stroke-width="1.7" /><path d="M3 4C7 7 9 11 12 8S18 4 22 3.5V8C18 9 15 11 12 13S6 10 3 9Z" fill="#c8c6c4" stroke="#8a8886" stroke-width="1.2" /><rect x="3" y="17" width="6" height="4" fill="#f7b756" stroke="#d86f00" stroke-width="1.2"/><rect x="15" y="15" width="7" height="4" fill="#f7b756" stroke="#d86f00" stroke-width="1.2"/><path d="M2.5 12C6 12 8 19 12 19S18 12 22 12" fill="none" stroke="#1169c2" stroke-width="3.2" /><path d="M2.5 12C6 12 8 19 12 19S18 12 22 12" fill="none" stroke="#86bdec" stroke-width="1.2" /></svg>
<svg style="position:absolute;left:1517.70px;top:321.50px;overflow:visible" width="24.5" height="24.5" viewBox="0 0 24 24" fill="none"><path d="M1 0V23H24" fill="none" stroke="#3b3a39" stroke-width="1.7" /><path d="M4 23V7H9V13H12V1H15V23M15 1H21V23M9 13V23" fill="none" stroke="#3b3a39" stroke-width="1.5" /><rect x="10" y="7" width="4" height="6" fill="#c8c6c4" stroke="#8a8886" stroke-width="1.0"/><path d="M13.5 1V13" fill="none" stroke="#1169c2" stroke-width="2.4" /></svg>
<svg style="position:absolute;left:1552.20px;top:321.50px;overflow:visible" width="24.5" height="24.5" viewBox="0 0 24 24" fill="none"><rect x="1" y="1" width="22" height="6" fill="#86bdec" stroke="#1169c2" stroke-width="1.6"/><rect x="4.5" y="7" width="15" height="6.5" fill="#86bdec" stroke="#1169c2" stroke-width="1.6"/><rect x="8" y="13.5" width="8" height="6.5" fill="#86bdec" stroke="#1169c2" stroke-width="1.6"/></svg>
<svg style="position:absolute;left:1586.70px;top:321.50px;overflow:visible" width="24.5" height="24.5" viewBox="0 0 24 24" fill="none"><path d="M1 0V23H24" fill="none" stroke="#3b3a39" stroke-width="1.7" /><rect x="5" y="6" width="3.5" height="3.5" fill="#86bdec" stroke="#86bdec" stroke-width="0.5"/><rect x="12" y="10.5" width="3.5" height="3.5" fill="#86bdec" stroke="#86bdec" stroke-width="0.5"/><rect x="18" y="14.5" width="3.5" height="3.5" fill="#86bdec" stroke="#86bdec" stroke-width="0.5"/><rect x="17.5" y="2" width="3.5" height="3.5" fill="#3b3a39" stroke="#3b3a39" stroke-width="0.5"/><rect x="4.5" y="16.5" width="3.5" height="3.5" fill="#3b3a39" stroke="#3b3a39" stroke-width="0.5"/></svg>
<svg style="position:absolute;left:1621.20px;top:321.50px;overflow:visible" width="24.5" height="24.5" viewBox="0 0 24 24" fill="none"><circle cx="12" cy="12" r="10.8" fill="#fafafa" stroke="#3b3a39" stroke-width="1.6"/><path d="M12 1.2A10.8 10.8 0 0 1 19 20.2L12 13.5Z" fill="#86bdec" stroke="#1169c2" stroke-width="1.6" /></svg>
<svg style="position:absolute;left:1655.70px;top:321.50px;overflow:visible" width="24.5" height="24.5" viewBox="0 0 24 24" fill="none"><circle cx="12" cy="12" r="8.2" fill="none" stroke="#fafafa" stroke-width="5.5"/><circle cx="12" cy="12" r="11" stroke="#8a8886" stroke-width="1"/><circle cx="12" cy="12" r="5.3" stroke="#8a8886" stroke-width="1"/><path d="M12 1A11 11 0 1 1 1.2 14L6.8 13A5.3 5.3 0 1 0 12 6.7Z" fill="#86bdec" stroke="#1169c2" stroke-width="1.5" /></svg>
<svg style="position:absolute;left:1483.20px;top:356.15px;overflow:visible" width="24.5" height="24.5" viewBox="0 0 24 24" fill="none"><rect x="1" y="1" width="22" height="22" fill="#fafafa" stroke="#3b3a39" stroke-width="1.7"/><rect x="1" y="1" width="10.5" height="22" fill="#86bdec" stroke="#1169c2" stroke-width="1.7"/><path d="M1 12H11.5" fill="none" stroke="#1169c2" stroke-width="1.7" /><path d="M11.5 7H23M16.5 7V23M16.5 15H23" fill="none" stroke="#3b3a39" stroke-width="1.4" /></svg>
<svg style="position:absolute;left:1517.70px;top:356.15px;overflow:visible" width="24.5" height="24.5" viewBox="0 0 24 24" fill="none"><circle cx="13.5" cy="10" r="7.8" fill="#fafafa" stroke="#3b3a39" stroke-width="1.5"/><path d="M9 1.5A10 10 0 0 0 19 19" fill="none" stroke="#3b3a39" stroke-width="1.6" /><path d="M14.5 20V23.5M8 23.5H21" fill="none" stroke="#3b3a39" stroke-width="1.6" /><path d="M10 6c2-1 3 .5 4 2s-2 2-3 1-1.5-1-1-3zM14 12c1.5-1 4 0 4 2s-2 2-3 1.5-1.5-2.5-1-3.5zM16 4c1 0 2.5 1 2.5 3" fill="#2f9b45" stroke="#2f9b45" stroke-width="1.2" /></svg>
<svg style="position:absolute;left:1552.20px;top:356.15px;overflow:visible" width="24.5" height="24.5" viewBox="0 0 24 24" fill="none"><path d="M1 3L6 1.5L10 4V10.5L6 12L1 9Z" fill="#86bdec" stroke="#1169c2" stroke-width="1.3" /><path d="M10 4L14 2H22V14L16 12L11 14L10 10.5Z" fill="#c8c6c4" stroke="#3b3a39" stroke-width="1.3" /><path d="M1 9L6 12L11 14V23L7 21L3 18L1 15Z" fill="#c8c6c4" stroke="#3b3a39" stroke-width="1.3" /><path d="M11 14L16 12L22 14V18L18 22L13 23L11 23Z" fill="#86bdec" stroke="#1169c2" stroke-width="1.3" /></svg>
<svg style="position:absolute;left:1586.70px;top:356.15px;overflow:visible" width="24.5" height="24.5" viewBox="0 0 24 24" fill="none"><path d="M1 3L6 1.5L10 4V10.5L6 12L1 9Z" fill="#fafafa" stroke="#1169c2" stroke-width="1.3" /><path d="M10 4L14 2H22V14L16 12L11 14L10 10.5Z" fill="#fafafa" stroke="#3b3a39" stroke-width="1.3" /><path d="M1 9L6 12L11 14V23L7 21L3 18L1 15Z" fill="#fafafa" stroke="#3b3a39" stroke-width="1.3" /><path d="M11 14L16 12L22 14V18L18 22L13 23L11 23Z" fill="#fafafa" stroke="#1169c2" stroke-width="1.3" /></svg>
<svg style="position:absolute;left:1621.20px;top:356.15px;overflow:visible" width="24.5" height="24.5" viewBox="0 0 24 24" fill="none"><path d="M15 0L22 26L14 18L2 24Z" fill="#3aa0da"/><path d="M15 0L22 26L14 18Z" fill="#1a7fc9"/></svg>
<svg style="position:absolute;left:1655.70px;top:356.15px;overflow:visible" width="24.5" height="24.5" viewBox="0 0 24 24" fill="none"><path d="M2 20A10.5 10.5 0 0 1 23 20H18.5A6 6 0 0 0 6.5 20Z" fill="#fafafa" stroke="#3b3a39" stroke-width="1.5" /><path d="M10 10.5A10.5 10.5 0 0 1 23 20H18.5A6 6 0 0 0 11.5 14.5Z" fill="#86bdec" stroke="#1169c2" stroke-width="1.5" /><path d="M12 19L18 13.5" fill="none" stroke="#3b3a39" stroke-width="1.6" /><circle cx="12" cy="19" r="1.6" fill="#3b3a39"/></svg>
<svg style="position:absolute;left:1483.20px;top:390.80px;overflow:visible" width="24.5" height="24.5" viewBox="0 0 24 24" fill="none"><rect x="1" y="3" width="22" height="17" fill="#fafafa" stroke="#3b3a39" stroke-width="1.7"/><text x="12" y="14.5" text-anchor="middle" font-family="Liberation Sans" font-size="10" fill="#2a8ad8">123</text><path d="M4 17H20" fill="none" stroke="#8a8886" stroke-width="1.2" /></svg>
<svg style="position:absolute;left:1517.70px;top:390.80px;overflow:visible" width="24.5" height="24.5" viewBox="0 0 24 24" fill="none"><rect x="1.5" y="1" width="21" height="22" fill="#fafafa" stroke="#3b3a39" stroke-width="1.7"/><path d="M5 4V20" fill="none" stroke="#8a8886" stroke-width="1.2" /><path d="M8 6H19M8 13H19" fill="none" stroke="#1169c2" stroke-width="2.2" /><path d="M8 9H12M8 16H12" fill="none" stroke="#8a8886" stroke-width="1.0" /></svg>
<svg style="position:absolute;left:1552.20px;top:390.80px;overflow:visible" width="24.5" height="24.5" viewBox="0 0 24 24" fill="none"><rect x="1" y="3" width="22" height="17" fill="#fafafa" stroke="#3b3a39" stroke-width="1.7"/><path d="M5 13L8 7.5L11 13Z" fill="#4caf50" stroke="#2b8a3e" stroke-width="1.3" /><path d="M13 7.5H19L16 13Z" fill="#f25a5a" stroke="#c23a3a" stroke-width="1.3" /><path d="M4 16.5H20" fill="none" stroke="#8a8886" stroke-width="1.2" /></svg>
<svg style="position:absolute;left:1586.70px;top:390.80px;overflow:visible" width="24.5" height="24.5" viewBox="0 0 24 24" fill="none"><rect x="1" y="1" width="21" height="22" fill="#fafafa" stroke="#3b3a39" stroke-width="1.6"/><rect x="1.8" y="1.8" width="19.4" height="3.2" fill="#c8c6c4" stroke="#c8c6c4" stroke-width="0.5"/><rect x="5" y="8" width="3.5" height="3.5" fill="#c8c6c4" stroke="#8a8886" stroke-width="1.0"/><rect x="5" y="14.5" width="3.5" height="3.5" fill="#c8c6c4" stroke="#8a8886" stroke-width="1.0"/><path d="M12.5 13H24L19.5 18V23.5H16.5V18Z" fill="#fafafa" stroke="#3b3a39" stroke-width="1.5" /></svg>
<svg style="position:absolute;left:1621.20px;top:390.80px;overflow:visible" width="24.5" height="24.5" viewBox="0 0 24 24" fill="none"><rect x="1" y="1" width="22" height="22" fill="#fafafa" stroke="#3b3a39" stroke-width="1.7"/><rect x="1.8" y="1.8" width="20.4" height="3.4" fill="#c8c6c4" stroke="#c8c6c4" stroke-width="0.5"/><path d="M1 5.5H23M1 11.5H23M1 17.5H23M8.3 5.5V23M15.6 5.5V23" fill="none" stroke="#8a8886" stroke-width="1.3" /><path d="M1 1H23V23H1Z" fill="none" stroke="#3b3a39" stroke-width="1.7" /></svg>
<svg style="position:absolute;left:1655.70px;top:390.80px;overflow:visible" width="24.5" height="24.5" viewBox="0 0 24 24" fill="none"><rect x="1" y="1" width="22" height="22" fill="#fafafa" stroke="#3b3a39" stroke-width="1.7"/><rect x="1.8" y="1.8" width="20.4" height="3.4" fill="#c8c6c4" stroke="#c8c6c4" stroke-width="0.5"/><rect x="15.6" y="5.5" width="7.4" height="17.5" fill="#86bdec" stroke="#86bdec" stroke-width="0.1"/><rect x="1" y="17" width="22" height="6" fill="#86bdec" stroke="#86bdec" stroke-width="0.1"/><path d="M1 11.5H15.6M8.3 5.5V17M15.6 5.5V17" fill="none" stroke="#8a8886" stroke-width="1.3" /><path d="M15.6 5.5V23M1 17H23M15.6 11.5H23M8.3 17V23" fill="none" stroke="#1169c2" stroke-width="1.3" /><path d="M1 5.5H23M1 1H23V23H1Z" fill="none" stroke="#3b3a39" stroke-width="1.7" /></svg>
<svg style="position:absolute;left:1483.20px;top:425.45px;overflow:visible" width="24.5" height="24.5" viewBox="0 0 24 24" fill="none"><text x="11" y="20" text-anchor="middle" font-family="Liberation Sans" font-weight="bold" font-size="19" fill="#2f86cf">R</text></svg>
<svg style="position:absolute;left:1517.70px;top:425.45px;overflow:visible" width="24.5" height="24.5" viewBox="0 0 24 24" fill="none"><text x="12.5" y="17.5" text-anchor="middle" font-family="Liberation Sans" font-weight="bold" font-size="18.5" fill="#2f86cf" textLength="24" lengthAdjust="spacingAndGlyphs">Py</text></svg>
<svg style="position:absolute;left:1552.20px;top:425.45px;overflow:visible" width="24.5" height="24.5" viewBox="0 0 24 24" fill="none"><path d="M1 0V23H24" fill="none" stroke="#3b3a39" stroke-width="1.7" /><path d="M1 4H17" fill="none" stroke="#1169c2" stroke-width="1.4" /><circle cx="19.5" cy="4" r="2.6" fill="#86bdec" stroke="#1169c2" stroke-width="1.3"/><path d="M1 10.5H13M1 16H9" fill="none" stroke="#8a8886" stroke-width="1.3" /><circle cx="14.5" cy="10.5" r="1.6" fill="#fafafa" stroke="#8a8886" stroke-width="1.2"/><circle cx="10.5" cy="16" r="1.6" fill="#fafafa" stroke="#8a8886" stroke-width="1.2"/></svg>
<svg style="position:absolute;left:1586.70px;top:425.45px;overflow:visible" width="24.5" height="24.5" viewBox="0 0 24 24" fill="none"><rect x="1" y="10" width="7" height="5" fill="#86bdec" stroke="#1169c2" stroke-width="1.3"/><path d="M8 12.5H12M12 3.5V21.5M12 3.5H15M12 12.5H15M12 21.5H15" fill="none" stroke="#3b3a39" stroke-width="1.4" /><rect x="15" y="1" width="8" height="5" fill="#86bdec" stroke="#1169c2" stroke-width="1.3"/><rect x="15" y="10" width="8" height="5" fill="#86bdec" stroke="#1169c2" stroke-width="1.3"/><rect x="15" y="19" width="8" height="5" fill="#86bdec" stroke="#1169c2" stroke-width="1.3"/></svg>
<svg style="position:absolute;left:1621.20px;top:425.45px;overflow:visible" width="24.5" height="24.5" viewBox="0 0 24 24" fill="none"><path d="M1.5 2H22.5V16H9L4.5 21V16H1.5Z" fill="#fafafa" stroke="#1169c2" stroke-width="1.6" /></svg>
<svg style="position:absolute;left:1655.70px;top:425.45px;overflow:visible" width="24.5" height="24.5" viewBox="0 0 24 24" fill="none"><path d="M4 1H16L21 6V23H4V13M4 8V1" fill="#fafafa" stroke="#3b3a39" stroke-width="1.4" /><path d="M16 1V6H21" fill="none" stroke="#3b3a39" stroke-width="1.2" /><circle cx="4" cy="9.5" r="2.2" fill="#2a8ad8"/><path d="M9 10H17M7.5 13.5H14" fill="none" stroke="#2a8ad8" stroke-width="1.3" /></svg>
<svg style="position:absolute;left:1483.20px;top:460.10px;overflow:visible" width="24.5" height="24.5" viewBox="0 0 24 24" fill="none"><path d="M7 3H17V11C17 15 14 16.5 12 16.5S7 15 7 11Z" fill="#fafafa" stroke="#3b3a39" stroke-width="1.5" /><path d="M7 5H3V8C3 11 5 12.5 7.5 12.5M17 5H21V8C21 11 19 12.5 16.5 12.5" fill="none" stroke="#3b3a39" stroke-width="1.5" /><path d="M12 16.5V19M9 19H15L16.5 22.5H7.5Z" fill="#fafafa" stroke="#3b3a39" stroke-width="1.4" /><rect x="6.8" y="2.2" width="10.4" height="2.5" fill="#86bdec" stroke="#1169c2" stroke-width="1.2"/><rect x="7" y="20.5" width="10" height="2.5" fill="#86bdec" stroke="#1169c2" stroke-width="1.2"/></svg>
<svg style="position:absolute;left:1517.70px;top:460.10px;overflow:visible" width="24.5" height="24.5" viewBox="0 0 24 24" fill="none"><path d="M2 1H15L21 7V23H2Z" fill="#fafafa" stroke="#3b3a39" stroke-width="1.6" /><path d="M15 1V7H21" fill="none" stroke="#3b3a39" stroke-width="1.3" /><rect x="5" y="16" width="2.5" height="5" fill="#3b3a39" stroke="#3b3a39" stroke-width="0.5"/><rect x="9.5" y="18" width="2.5" height="3" fill="#3b3a39" stroke="#3b3a39" stroke-width="0.5"/><rect x="14" y="12" width="2.5" height="9" fill="#3b3a39" stroke="#3b3a39" stroke-width="0.5"/></svg>
<svg style="position:absolute;left:1552.20px;top:460.10px;overflow:visible" width="24.5" height="24.5" viewBox="0 0 24 24" fill="none"><rect x="2" y="5" width="21" height="17" fill="#fafafa" stroke="#3b3a39" stroke-width="1.6"/><text x="13" y="17" text-anchor="middle" font-family="Liberation Sans" font-size="10" fill="#2a8ad8">123</text><path d="M5 19.5H20" fill="none" stroke="#8a8886" stroke-width="1.0" /><path d="M5 0L0.5 10H4.5L2 17L10 7H6L9 0Z" fill="#f7b543" stroke="#c46000" stroke-width="1.2" stroke-linejoin="round"/></svg>
<svg style="position:absolute;left:1586.70px;top:460.10px;overflow:visible" width="24.5" height="24.5" viewBox="0 0 24 24" fill="none"><rect x="11" y="4" width="8" height="8" fill="#fafafa" stroke="#8a8886" stroke-width="1.2"/><rect x="2" y="13" width="8" height="8" fill="#fafafa" stroke="#8a8886" stroke-width="1.2"/><rect x="8" y="9" width="3" height="3" fill="#1169c2" stroke="#1169c2" stroke-width="0.5"/><path d="M12.5 13H24L19.5 18V23.5H16.5V18Z" fill="#fafafa" stroke="#3b3a39" stroke-width="1.5" /><path d="M5 0L0.5 10H4.5L2 17L10 7H6L9 0Z" fill="#f7b543" stroke="#c46000" stroke-width="1.2" stroke-linejoin="round"/></svg>
<svg style="position:absolute;left:1621.20px;top:460.10px;overflow:visible" width="24.5" height="24.5" viewBox="0 0 24 24" fill="none"><path d="M2 9V22H14M19 12V4H8" fill="none" stroke="#3b3a39" stroke-width="1.5" /><text x="10" y="18" font-family="Liberation Sans" font-size="12" fill="#2a8ad8">A</text><path d="M12.5 13H24L19.5 18V23.5H16.5V18Z" fill="#fafafa" stroke="#3b3a39" stroke-width="1.5" /><path d="M5 0L0.5 10H4.5L2 17L10 7H6L9 0Z" fill="#f7b543" stroke="#c46000" stroke-width="1.2" stroke-linejoin="round"/></svg>
<svg style="position:absolute;left:1655.70px;top:460.10px;overflow:visible" width="24.5" height="24.5" viewBox="0 0 24 24" fill="none"><path d="M2 9V22H14M19 12V4H8" fill="none" stroke="#3b3a39" stroke-width="1.5" /><path d="M9 8.5H18" fill="none" stroke="#8a8886" stroke-width="1.2" /><rect x="5" y="13" width="2.5" height="2.5" fill="#fafafa" stroke="#8a8886" stroke-width="1.0"/><path d="M9 14.5H12" fill="none" stroke="#8a8886" stroke-width="1.0" /><path d="M12.5 13H24L19.5 18V23.5H16.5V18Z" fill="#fafafa" stroke="#3b3a39" stroke-width="1.5" /><path d="M5 0L0.5 10H4.5L2 17L10 7H6L9 0Z" fill="#f7b543" stroke="#c46000" stroke-width="1.2" stroke-linejoin="round"/></svg>
<svg style="position:absolute;left:1483.20px;top:494.75px;overflow:visible" width="24.5" height="24.5" viewBox="0 0 24 24" fill="none"><path d="M8.5 1.8H23.8V11.8C21 12.5 19 14.5 18 17.2C17.3 19 16.5 21 16 24.6H0.6V13.5" fill="#fafafa" stroke="#1463b0" stroke-width="2.2" /><path d="M8 11L10.5 9.5L11.5 7L15 6.8L15.8 4.3H21.3V11C18.5 12 16.5 14 15.5 17C15 19 14.8 21 14.5 22.8H2.5V18L7.5 17.5Z" fill="#86bdec" stroke="#86bdec" stroke-width="0.3" /><path d="M-1 1.5Q-1 0.3 0.5 0.3H5.2Q6.7 0.3 6.7 1.5V9.5L2.8 13.8L-1 9.5Z" fill="#e06c00" stroke="#e06c00" stroke-width="0.5" /><circle cx="2.8" cy="4.8" r="1.7" fill="#fff"/><circle cx="20.4" cy="21.8" r="3.6" fill="#e06c00"/><circle cx="23.8" cy="15.3" r="2.1" fill="#e06c00"/></svg>
<svg style="position:absolute;left:1517.70px;top:494.75px;overflow:visible" width="24.5" height="24.5" viewBox="0 0 24 24" fill="none"><path d="M10 2.9L20.5 13.4L10 23.9L-0.5 13.4Z" fill="#fafafa" stroke="#8a2aa0" stroke-width="1.3" stroke-linejoin="round"/><path d="M14 2.9L24.5 13.4L14 23.9L3.5 13.4Z" fill="#fafafa" stroke="#8a2aa0" stroke-width="1.3" stroke-linejoin="round"/><path d="M8.75 8.15L19.25 18.65M19.25 8.15L8.75 18.65" fill="none" stroke="#8a2aa0" stroke-width="1.3" /></svg>
<svg style="position:absolute;left:1552.20px;top:494.75px;overflow:visible" width="24.5" height="24.5" viewBox="0 0 24 24" fill="none"><path d="M1 3.6H16.7L24 12.9L16.7 22H1L16.7 3.6M1 3.6L8 12.2M9.2 22L20 9.2" fill="#fafafa" stroke="#1478e0" stroke-width="1.5" stroke-linejoin="round"/></svg>
<svg style="position:absolute;left:1586.70px;top:494.75px;overflow:visible" width="24.5" height="24.5" viewBox="0 0 24 24" fill="none"><circle cx="4" cy="12" r="1.5" fill="#3b3a39"/><circle cx="12" cy="12" r="1.5" fill="#3b3a39"/><circle cx="20" cy="12" r="1.5" fill="#3b3a39"/></svg>
</body></html>
